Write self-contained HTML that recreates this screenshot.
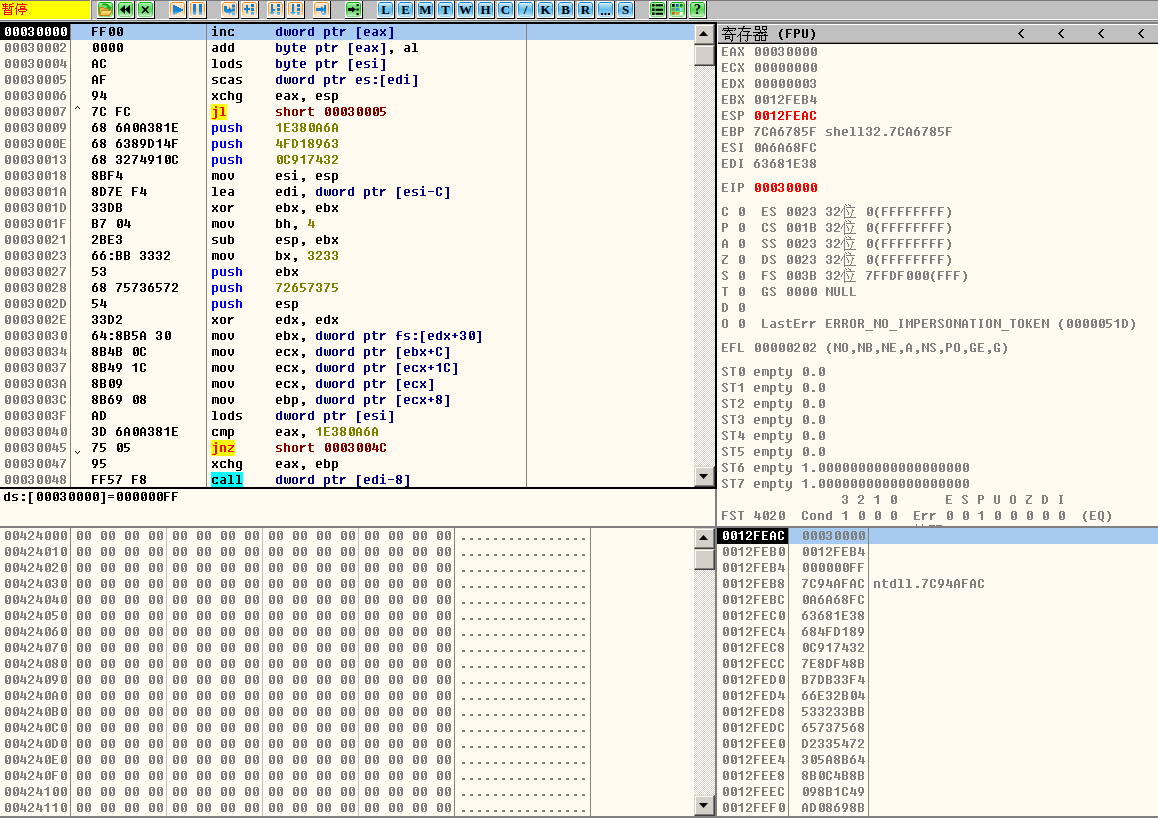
<!DOCTYPE html><html><head><meta charset="utf-8"><style>
*{margin:0;padding:0;box-sizing:border-box}
html,body{width:1158px;height:818px;overflow:hidden}
body{position:relative;background:#C0C0C0;font-family:"Liberation Mono",monospace}
.a{position:absolute}
.t{position:absolute;white-space:pre;font-family:"Liberation Mono",monospace;font-weight:bold;font-size:13.333px;line-height:16px;height:16px;transform:scaleX(0.875);transform-origin:0 0;letter-spacing:1.1428px}
.pane{position:absolute;background:#FFFBF0;overflow:hidden}
.vl{position:absolute;width:1px;background:#808080}
.btn{position:absolute;top:1px;width:18px;height:18px;background:#fff;border-right:1px solid #000;border-bottom:1px solid #000}
.ic{position:absolute;left:1px;top:1px;width:15px;height:15px;border-radius:2px}
.blue{background:linear-gradient(#d0ecfa,#78c8f0 30%,#4cb2ea 65%,#c4e8fa);box-shadow:inset 0 0 0 1px #0a80d8}
.org{background:linear-gradient(#fff0e0,#ffd8b0 30%,#ffcc98 60%,#ffead8);box-shadow:inset 0 0 0 1px #f59a30}
.grn{background:linear-gradient(#b0f0b0,#78dc78 30%,#60d060 60%,#c8f4c8);box-shadow:inset 0 0 0 1px #10c010}
.lt{position:absolute;left:0;top:0;width:15px;height:15px;text-align:center;font-family:"Liberation Serif",serif;font-weight:bold;font-size:13px;line-height:16px;color:#000}
.sbtn{position:absolute;background:#D4D0C8;border-top:1px solid #D4D0C8;border-left:1px solid #D4D0C8;border-right:1px solid #404040;border-bottom:1px solid #404040;box-shadow:inset -1px -1px 0 #808080, inset 1px 1px 0 #fff}
.track{position:absolute;background-color:#fff;background-image:linear-gradient(45deg,#D4D0C8 25%,transparent 25%,transparent 75%,#D4D0C8 75%),linear-gradient(45deg,#D4D0C8 25%,transparent 25%,transparent 75%,#D4D0C8 75%);background-size:2px 2px;background-position:0 0,1px 1px}
</style></head><body>
<svg width="0" height="0" style="position:absolute;left:0;top:0"><defs><linearGradient id="bdblue" x1="0" y1="0" x2="0" y2="1"><stop offset="0" stop-color="#0a7ed4"/><stop offset="0.6" stop-color="#2a98e0"/><stop offset="1" stop-color="#a8dcf6"/></linearGradient><linearGradient id="bgblue" x1="0" y1="0" x2="0" y2="1"><stop offset="0" stop-color="#e4f6fd"/><stop offset="0.12" stop-color="#b4e0f8"/><stop offset="0.5" stop-color="#62bcee"/><stop offset="0.8" stop-color="#86ccf2"/><stop offset="1" stop-color="#cceafa"/></linearGradient><linearGradient id="bdgrn" x1="0" y1="0" x2="0" y2="1"><stop offset="0" stop-color="#00b400"/><stop offset="0.6" stop-color="#20c020"/><stop offset="1" stop-color="#80e080"/></linearGradient><linearGradient id="bggrn" x1="0" y1="0" x2="0" y2="1"><stop offset="0" stop-color="#c8f4c8"/><stop offset="0.12" stop-color="#90e890"/><stop offset="0.5" stop-color="#5cd45c"/><stop offset="0.8" stop-color="#88e088"/><stop offset="1" stop-color="#ccf4cc"/></linearGradient><linearGradient id="bdorg" x1="0" y1="0" x2="0" y2="1"><stop offset="0" stop-color="#f08a18"/><stop offset="0.6" stop-color="#f5a23c"/><stop offset="1" stop-color="#fde2c4"/></linearGradient><linearGradient id="bgorg" x1="0" y1="0" x2="0" y2="1"><stop offset="0" stop-color="#fff8f0"/><stop offset="0.12" stop-color="#ffe4c8"/><stop offset="0.5" stop-color="#ffd09c"/><stop offset="0.8" stop-color="#ffdcb8"/><stop offset="1" stop-color="#ffeede"/></linearGradient><path id="g30" d="M3 3h4v1h-4zM2 4h2v1h-2zM6 4h2v1h-2zM2 5h2v1h-2zM5 5h3v1h-3zM2 6h2v1h-2zM5 6h3v1h-3zM2 7h2v1h-2zM6 7h2v1h-2zM2 8h3v1h-3zM6 8h2v1h-2zM2 9h3v1h-3zM6 9h2v1h-2zM2 10h2v1h-2zM6 10h2v1h-2zM3 11h4v1h-4z"/><path id="g31" d="M4 3h2v1h-2zM3 4h3v1h-3zM1 5h5v1h-5zM4 6h2v1h-2zM4 7h2v1h-2zM4 8h2v1h-2zM4 9h2v1h-2zM4 10h2v1h-2zM4 11h2v1h-2z"/><path id="g32" d="M2 3h4v1h-4zM1 4h2v1h-2zM5 4h2v1h-2zM1 5h2v1h-2zM5 5h2v1h-2zM5 6h2v1h-2zM4 7h2v1h-2zM3 8h2v1h-2zM2 9h2v1h-2zM1 10h2v1h-2zM1 11h6v1h-6z"/><path id="g33" d="M2 3h4v1h-4zM1 4h2v1h-2zM5 4h2v1h-2zM1 5h2v1h-2zM5 5h2v1h-2zM5 6h2v1h-2zM3 7h3v1h-3zM5 8h2v1h-2zM1 9h2v1h-2zM5 9h2v1h-2zM1 10h2v1h-2zM5 10h2v1h-2zM2 11h4v1h-4z"/><path id="g34" d="M2 3h2v1h-2zM2 4h2v1h-2zM2 5h2v1h-2zM5 5h2v1h-2zM2 6h2v1h-2zM5 6h2v1h-2zM2 7h2v1h-2zM5 7h2v1h-2zM1 8h2v1h-2zM5 8h2v1h-2zM1 9h7v1h-7zM5 10h2v1h-2zM5 11h2v1h-2z"/><path id="g35" d="M1 3h6v1h-6zM1 4h2v1h-2zM1 5h2v1h-2zM1 6h2v1h-2zM1 7h5v1h-5zM5 8h2v1h-2zM5 9h2v1h-2zM4 10h2v1h-2zM1 11h4v1h-4z"/><path id="g36" d="M3 3h3v1h-3zM3 4h2v1h-2zM2 5h2v1h-2zM1 6h5v1h-5zM1 7h2v1h-2zM5 7h2v1h-2zM1 8h2v1h-2zM5 8h2v1h-2zM1 9h2v1h-2zM5 9h2v1h-2zM1 10h2v1h-2zM5 10h2v1h-2zM2 11h4v1h-4z"/><path id="g37" d="M1 3h6v1h-6zM5 4h2v1h-2zM4 5h2v1h-2zM4 6h2v1h-2zM3 7h2v1h-2zM3 8h2v1h-2zM2 9h2v1h-2zM2 10h2v1h-2zM2 11h2v1h-2z"/><path id="g38" d="M2 3h4v1h-4zM1 4h2v1h-2zM5 4h2v1h-2zM1 5h2v1h-2zM5 5h2v1h-2zM1 6h3v1h-3zM5 6h2v1h-2zM2 7h4v1h-4zM1 8h2v1h-2zM4 8h3v1h-3zM1 9h2v1h-2zM5 9h2v1h-2zM1 10h2v1h-2zM5 10h2v1h-2zM2 11h4v1h-4z"/><path id="g39" d="M2 3h4v1h-4zM1 4h2v1h-2zM5 4h2v1h-2zM1 5h2v1h-2zM5 5h2v1h-2zM1 6h2v1h-2zM5 6h2v1h-2zM1 7h2v1h-2zM5 7h2v1h-2zM2 8h5v1h-5zM4 9h2v1h-2zM3 10h2v1h-2zM2 11h3v1h-3z"/><path id="g41" d="M3 3h2v1h-2zM2 4h4v1h-4zM1 5h2v1h-2zM5 5h2v1h-2zM1 6h2v1h-2zM5 6h2v1h-2zM1 7h2v1h-2zM5 7h2v1h-2zM1 8h6v1h-6zM1 9h2v1h-2zM5 9h2v1h-2zM1 10h2v1h-2zM5 10h2v1h-2zM1 11h2v1h-2zM5 11h2v1h-2z"/><path id="g42" d="M1 3h5v1h-5zM1 4h2v1h-2zM5 4h2v1h-2zM1 5h2v1h-2zM5 5h2v1h-2zM1 6h2v1h-2zM5 6h2v1h-2zM1 7h5v1h-5zM1 8h2v1h-2zM5 8h2v1h-2zM1 9h2v1h-2zM5 9h2v1h-2zM1 10h2v1h-2zM5 10h2v1h-2zM1 11h5v1h-5z"/><path id="g43" d="M2 3h4v1h-4zM1 4h2v1h-2zM5 4h2v1h-2zM1 5h2v1h-2zM5 5h2v1h-2zM1 6h2v1h-2zM1 7h2v1h-2zM1 8h2v1h-2zM1 9h2v1h-2zM5 9h2v1h-2zM1 10h2v1h-2zM5 10h2v1h-2zM2 11h4v1h-4z"/><path id="g44" d="M1 3h4v1h-4zM1 4h2v1h-2zM4 4h2v1h-2zM1 5h2v1h-2zM5 5h2v1h-2zM1 6h2v1h-2zM5 6h2v1h-2zM1 7h2v1h-2zM5 7h2v1h-2zM1 8h2v1h-2zM5 8h2v1h-2zM1 9h2v1h-2zM5 9h2v1h-2zM1 10h2v1h-2zM4 10h2v1h-2zM1 11h4v1h-4z"/><path id="g45" d="M1 3h6v1h-6zM1 4h2v1h-2zM1 5h2v1h-2zM1 6h2v1h-2zM1 7h5v1h-5zM1 8h2v1h-2zM1 9h2v1h-2zM1 10h2v1h-2zM1 11h6v1h-6z"/><path id="g46" d="M1 3h6v1h-6zM1 4h2v1h-2zM1 5h2v1h-2zM1 6h2v1h-2zM1 7h5v1h-5zM1 8h2v1h-2zM1 9h2v1h-2zM1 10h2v1h-2zM1 11h2v1h-2z"/><path id="g47" d="M2 3h4v1h-4zM1 4h2v1h-2zM5 4h2v1h-2zM1 5h2v1h-2zM5 5h2v1h-2zM1 6h2v1h-2zM1 7h2v1h-2zM1 8h2v1h-2zM4 8h3v1h-3zM1 9h2v1h-2zM5 9h2v1h-2zM1 10h2v1h-2zM5 10h2v1h-2zM2 11h5v1h-5z"/><path id="g49" d="M2 3h4v1h-4zM3 4h2v1h-2zM3 5h2v1h-2zM3 6h2v1h-2zM3 7h2v1h-2zM3 8h2v1h-2zM3 9h2v1h-2zM3 10h2v1h-2zM2 11h4v1h-4z"/><path id="g4b" d="M1 3h2v1h-2zM5 3h2v1h-2zM1 4h2v1h-2zM5 4h1v1h-1zM1 5h2v1h-2zM4 5h2v1h-2zM1 6h2v1h-2zM4 6h1v1h-1zM1 7h4v1h-4zM1 8h2v1h-2zM4 8h1v1h-1zM1 9h2v1h-2zM4 9h2v1h-2zM1 10h2v1h-2zM5 10h2v1h-2zM1 11h2v1h-2zM5 11h2v1h-2z"/><path id="g4c" d="M1 3h2v1h-2zM1 4h2v1h-2zM1 5h2v1h-2zM1 6h2v1h-2zM1 7h2v1h-2zM1 8h2v1h-2zM1 9h2v1h-2zM1 10h2v1h-2zM1 11h6v1h-6z"/><path id="g4d" d="M1 3h2v1h-2zM6 3h2v1h-2zM1 4h2v1h-2zM6 4h2v1h-2zM1 5h3v1h-3zM5 5h3v1h-3zM1 6h2v1h-2zM4 6h1v1h-1zM6 6h2v1h-2zM1 7h2v1h-2zM4 7h1v1h-1zM6 7h2v1h-2zM1 8h2v1h-2zM4 8h1v1h-1zM6 8h2v1h-2zM1 9h2v1h-2zM6 9h2v1h-2zM1 10h2v1h-2zM6 10h2v1h-2zM1 11h2v1h-2zM6 11h2v1h-2z"/><path id="g4e" d="M1 3h2v1h-2zM6 3h2v1h-2zM1 4h3v1h-3zM6 4h2v1h-2zM1 5h3v1h-3zM6 5h2v1h-2zM1 6h2v1h-2zM4 6h1v1h-1zM6 6h2v1h-2zM1 7h2v1h-2zM4 7h1v1h-1zM6 7h2v1h-2zM1 8h2v1h-2zM5 8h3v1h-3zM1 9h2v1h-2zM6 9h2v1h-2zM1 10h2v1h-2zM6 10h2v1h-2zM1 11h2v1h-2zM6 11h2v1h-2z"/><path id="g4f" d="M2 3h4v1h-4zM1 4h2v1h-2zM5 4h2v1h-2zM1 5h2v1h-2zM5 5h2v1h-2zM1 6h2v1h-2zM5 6h2v1h-2zM1 7h2v1h-2zM5 7h2v1h-2zM1 8h2v1h-2zM5 8h2v1h-2zM1 9h2v1h-2zM5 9h2v1h-2zM1 10h2v1h-2zM5 10h2v1h-2zM2 11h4v1h-4z"/><path id="g50" d="M1 3h5v1h-5zM1 4h2v1h-2zM5 4h2v1h-2zM1 5h2v1h-2zM5 5h2v1h-2zM1 6h2v1h-2zM5 6h2v1h-2zM1 7h5v1h-5zM1 8h2v1h-2zM1 9h2v1h-2zM1 10h2v1h-2zM1 11h2v1h-2z"/><path id="g51" d="M2 3h4v1h-4zM1 4h2v1h-2zM5 4h2v1h-2zM1 5h2v1h-2zM5 5h2v1h-2zM1 6h2v1h-2zM5 6h2v1h-2zM1 7h2v1h-2zM5 7h2v1h-2zM1 8h2v1h-2zM5 8h2v1h-2zM1 9h2v1h-2zM5 9h2v1h-2zM1 10h2v1h-2zM5 10h2v1h-2zM2 11h4v1h-4zM4 12h2v1h-2zM5 13h2v1h-2z"/><path id="g52" d="M1 3h5v1h-5zM1 4h2v1h-2zM5 4h2v1h-2zM1 5h2v1h-2zM5 5h2v1h-2zM1 6h2v1h-2zM5 6h2v1h-2zM1 7h5v1h-5zM1 8h2v1h-2zM4 8h2v1h-2zM1 9h2v1h-2zM5 9h2v1h-2zM1 10h2v1h-2zM5 10h2v1h-2zM1 11h2v1h-2zM5 11h2v1h-2z"/><path id="g53" d="M2 3h4v1h-4zM1 4h2v1h-2zM5 4h2v1h-2zM1 5h2v1h-2zM2 6h2v1h-2zM3 7h2v1h-2zM4 8h2v1h-2zM5 9h2v1h-2zM1 10h2v1h-2zM5 10h2v1h-2zM2 11h4v1h-4z"/><path id="g54" d="M1 3h6v1h-6zM3 4h2v1h-2zM3 5h2v1h-2zM3 6h2v1h-2zM3 7h2v1h-2zM3 8h2v1h-2zM3 9h2v1h-2zM3 10h2v1h-2zM3 11h2v1h-2z"/><path id="g55" d="M1 3h2v1h-2zM5 3h2v1h-2zM1 4h2v1h-2zM5 4h2v1h-2zM1 5h2v1h-2zM5 5h2v1h-2zM1 6h2v1h-2zM5 6h2v1h-2zM1 7h2v1h-2zM5 7h2v1h-2zM1 8h2v1h-2zM5 8h2v1h-2zM1 9h2v1h-2zM5 9h2v1h-2zM1 10h2v1h-2zM5 10h2v1h-2zM2 11h4v1h-4z"/><path id="g58" d="M1 3h2v1h-2zM5 3h2v1h-2zM1 4h2v1h-2zM5 4h2v1h-2zM2 5h2v1h-2zM5 5h1v1h-1zM3 6h2v1h-2zM3 7h2v1h-2zM2 8h1v1h-1zM4 8h2v1h-2zM1 9h2v1h-2zM5 9h2v1h-2zM1 10h2v1h-2zM5 10h2v1h-2zM1 11h2v1h-2zM5 11h2v1h-2z"/><path id="g5a" d="M1 3h6v1h-6zM5 4h2v1h-2zM4 5h2v1h-2zM3 6h2v1h-2zM2 7h2v1h-2zM1 8h2v1h-2zM1 9h2v1h-2zM1 10h2v1h-2zM1 11h6v1h-6z"/><path id="g61" d="M2 5h4v1h-4zM5 6h2v1h-2zM5 7h2v1h-2zM2 8h5v1h-5zM1 9h2v1h-2zM5 9h2v1h-2zM1 10h2v1h-2zM5 10h2v1h-2zM2 11h5v1h-5z"/><path id="g62" d="M1 3h2v1h-2zM1 4h2v1h-2zM1 5h5v1h-5zM1 6h2v1h-2zM5 6h2v1h-2zM1 7h2v1h-2zM5 7h2v1h-2zM1 8h2v1h-2zM5 8h2v1h-2zM1 9h2v1h-2zM5 9h2v1h-2zM1 10h2v1h-2zM5 10h2v1h-2zM1 11h5v1h-5z"/><path id="g63" d="M2 5h5v1h-5zM1 6h2v1h-2zM5 6h2v1h-2zM1 7h2v1h-2zM1 8h2v1h-2zM1 9h2v1h-2zM1 10h2v1h-2zM5 10h2v1h-2zM2 11h5v1h-5z"/><path id="g64" d="M5 3h2v1h-2zM5 4h2v1h-2zM2 5h5v1h-5zM1 6h2v1h-2zM5 6h2v1h-2zM1 7h2v1h-2zM5 7h2v1h-2zM1 8h2v1h-2zM5 8h2v1h-2zM1 9h2v1h-2zM5 9h2v1h-2zM1 10h2v1h-2zM5 10h2v1h-2zM2 11h5v1h-5z"/><path id="g65" d="M2 5h4v1h-4zM1 6h2v1h-2zM5 6h2v1h-2zM1 7h2v1h-2zM5 7h2v1h-2zM1 8h6v1h-6zM1 9h2v1h-2zM1 10h2v1h-2zM2 11h4v1h-4z"/><path id="g66" d="M3 3h4v1h-4zM2 4h2v1h-2zM2 5h2v1h-2zM2 6h2v1h-2zM1 7h6v1h-6zM2 8h2v1h-2zM2 9h2v1h-2zM2 10h2v1h-2zM2 11h2v1h-2z"/><path id="g67" d="M2 5h5v1h-5zM1 6h2v1h-2zM5 6h2v1h-2zM1 7h2v1h-2zM5 7h2v1h-2zM1 8h2v1h-2zM5 8h2v1h-2zM1 9h2v1h-2zM5 9h2v1h-2zM1 10h2v1h-2zM5 10h2v1h-2zM2 11h5v1h-5zM5 12h2v1h-2zM5 13h2v1h-2zM1 14h5v1h-5z"/><path id="g68" d="M1 3h2v1h-2zM1 4h2v1h-2zM1 5h5v1h-5zM1 6h2v1h-2zM5 6h2v1h-2zM1 7h2v1h-2zM5 7h2v1h-2zM1 8h2v1h-2zM5 8h2v1h-2zM1 9h2v1h-2zM5 9h2v1h-2zM1 10h2v1h-2zM5 10h2v1h-2zM1 11h2v1h-2zM5 11h2v1h-2z"/><path id="g69" d="M3 2h2v1h-2zM3 3h2v1h-2zM1 5h4v1h-4zM3 6h2v1h-2zM3 7h2v1h-2zM3 8h2v1h-2zM3 9h2v1h-2zM3 10h2v1h-2zM1 11h6v1h-6z"/><path id="g6a" d="M4 2h2v1h-2zM4 3h2v1h-2zM2 5h4v1h-4zM4 6h2v1h-2zM4 7h2v1h-2zM4 8h2v1h-2zM4 9h2v1h-2zM4 10h2v1h-2zM4 11h2v1h-2zM4 12h2v1h-2zM4 13h2v1h-2zM1 14h4v1h-4z"/><path id="g6c" d="M1 3h4v1h-4zM3 4h2v1h-2zM3 5h2v1h-2zM3 6h2v1h-2zM3 7h2v1h-2zM3 8h2v1h-2zM3 9h2v1h-2zM3 10h2v1h-2zM1 11h6v1h-6z"/><path id="g6d" d="M1 5h6v1h-6zM1 6h2v1h-2zM4 6h1v1h-1zM6 6h2v1h-2zM1 7h2v1h-2zM4 7h1v1h-1zM6 7h2v1h-2zM1 8h2v1h-2zM4 8h1v1h-1zM6 8h2v1h-2zM1 9h2v1h-2zM4 9h1v1h-1zM6 9h2v1h-2zM1 10h2v1h-2zM4 10h1v1h-1zM6 10h2v1h-2zM1 11h2v1h-2zM6 11h2v1h-2z"/><path id="g6e" d="M1 5h5v1h-5zM1 6h2v1h-2zM5 6h2v1h-2zM1 7h2v1h-2zM5 7h2v1h-2zM1 8h2v1h-2zM5 8h2v1h-2zM1 9h2v1h-2zM5 9h2v1h-2zM1 10h2v1h-2zM5 10h2v1h-2zM1 11h2v1h-2zM5 11h2v1h-2z"/><path id="g6f" d="M2 5h4v1h-4zM1 6h2v1h-2zM5 6h2v1h-2zM1 7h2v1h-2zM5 7h2v1h-2zM1 8h2v1h-2zM5 8h2v1h-2zM1 9h2v1h-2zM5 9h2v1h-2zM1 10h2v1h-2zM5 10h2v1h-2zM2 11h4v1h-4z"/><path id="g70" d="M1 5h5v1h-5zM1 6h2v1h-2zM5 6h2v1h-2zM1 7h2v1h-2zM5 7h2v1h-2zM1 8h2v1h-2zM5 8h2v1h-2zM1 9h2v1h-2zM5 9h2v1h-2zM1 10h2v1h-2zM5 10h2v1h-2zM1 11h5v1h-5zM1 12h2v1h-2zM1 13h2v1h-2zM1 14h2v1h-2z"/><path id="g72" d="M1 5h2v1h-2zM4 5h3v1h-3zM1 6h5v1h-5zM1 7h3v1h-3zM1 8h2v1h-2zM1 9h2v1h-2zM1 10h2v1h-2zM1 11h2v1h-2z"/><path id="g73" d="M2 5h5v1h-5zM1 6h2v1h-2zM1 7h2v1h-2zM2 8h4v1h-4zM5 9h2v1h-2zM5 10h2v1h-2zM1 11h5v1h-5z"/><path id="g74" d="M2 3h2v1h-2zM2 4h2v1h-2zM1 5h6v1h-6zM2 6h2v1h-2zM2 7h2v1h-2zM2 8h2v1h-2zM2 9h2v1h-2zM2 10h2v1h-2zM3 11h4v1h-4z"/><path id="g75" d="M1 5h2v1h-2zM5 5h2v1h-2zM1 6h2v1h-2zM5 6h2v1h-2zM1 7h2v1h-2zM5 7h2v1h-2zM1 8h2v1h-2zM5 8h2v1h-2zM1 9h2v1h-2zM5 9h2v1h-2zM1 10h2v1h-2zM5 10h2v1h-2zM2 11h5v1h-5z"/><path id="g76" d="M1 5h2v1h-2zM5 5h2v1h-2zM1 6h2v1h-2zM5 6h2v1h-2zM1 7h2v1h-2zM5 7h2v1h-2zM1 8h2v1h-2zM5 8h2v1h-2zM1 9h2v1h-2zM5 9h2v1h-2zM2 10h4v1h-4zM3 11h2v1h-2z"/><path id="g77" d="M1 5h2v1h-2zM6 5h2v1h-2zM1 6h2v1h-2zM4 6h1v1h-1zM6 6h2v1h-2zM1 7h2v1h-2zM4 7h1v1h-1zM6 7h2v1h-2zM1 8h2v1h-2zM4 8h1v1h-1zM6 8h2v1h-2zM1 9h2v1h-2zM4 9h1v1h-1zM6 9h2v1h-2zM1 10h2v1h-2zM4 10h1v1h-1zM6 10h2v1h-2zM2 11h2v1h-2zM5 11h2v1h-2z"/><path id="g78" d="M1 5h2v1h-2zM5 5h2v1h-2zM1 6h2v1h-2zM5 6h2v1h-2zM2 7h4v1h-4zM3 8h2v1h-2zM2 9h4v1h-4zM1 10h2v1h-2zM5 10h2v1h-2zM1 11h2v1h-2zM5 11h2v1h-2z"/><path id="g79" d="M1 5h2v1h-2zM5 5h2v1h-2zM1 6h2v1h-2zM5 6h2v1h-2zM1 7h2v1h-2zM5 7h2v1h-2zM1 8h2v1h-2zM5 8h2v1h-2zM1 9h2v1h-2zM5 9h2v1h-2zM1 10h2v1h-2zM5 10h2v1h-2zM2 11h5v1h-5zM4 12h2v1h-2zM3 13h2v1h-2zM0 14h4v1h-4z"/><path id="g7a" d="M1 5h6v1h-6zM5 6h2v1h-2zM4 7h2v1h-2zM3 8h2v1h-2zM2 9h2v1h-2zM1 10h2v1h-2zM1 11h6v1h-6z"/><path id="g28" d="M4 3h2v1h-2zM3 4h2v1h-2zM3 5h2v1h-2zM2 6h2v1h-2zM2 7h2v1h-2zM2 8h2v1h-2zM2 9h2v1h-2zM2 10h2v1h-2zM3 11h2v1h-2zM3 12h2v1h-2zM4 13h2v1h-2z"/><path id="g29" d="M2 3h2v1h-2zM3 4h2v1h-2zM3 5h2v1h-2zM4 6h2v1h-2zM4 7h2v1h-2zM4 8h2v1h-2zM4 9h2v1h-2zM4 10h2v1h-2zM3 11h2v1h-2zM3 12h2v1h-2zM2 13h2v1h-2z"/><path id="g5b" d="M2 3h4v1h-4zM2 4h2v1h-2zM2 5h2v1h-2zM2 6h2v1h-2zM2 7h2v1h-2zM2 8h2v1h-2zM2 9h2v1h-2zM2 10h2v1h-2zM2 11h2v1h-2zM2 12h2v1h-2zM2 13h2v1h-2zM2 14h4v1h-4z"/><path id="g5d" d="M2 3h4v1h-4zM4 4h2v1h-2zM4 5h2v1h-2zM4 6h2v1h-2zM4 7h2v1h-2zM4 8h2v1h-2zM4 9h2v1h-2zM4 10h2v1h-2zM4 11h2v1h-2zM4 12h2v1h-2zM4 13h2v1h-2zM2 14h4v1h-4z"/><path id="g2c" d="M3 10h3v1h-3zM3 11h3v1h-3zM4 12h2v1h-2zM3 13h2v1h-2z"/><path id="g2e" d="M3 10h3v1h-3zM3 11h3v1h-3z"/><path id="g3a" d="M3 5h3v1h-3zM3 6h3v1h-3zM3 10h3v1h-3zM3 11h3v1h-3z"/><path id="g2b" d="M3 5h2v1h-2zM3 6h2v1h-2zM1 7h6v1h-6zM3 8h2v1h-2zM3 9h2v1h-2z"/><path id="g2d" d="M1 7h6v1h-6z"/><path id="g3d" d="M1 6h6v1h-6zM1 8h6v1h-6z"/><path id="g5f" d="M0 14h8v1h-8z"/></defs></svg>
<div class="a" style="left:0;top:0;width:1158px;height:1px;background:#787878"></div>
<div class="a" style="left:0;top:0;width:90px;height:1px;background:#787878"></div>
<div class="a" style="left:0;top:19px;width:1158px;height:1px;background:#fff"></div>
<div class="a" style="left:0;top:20px;width:1158px;height:1px;background:#808080"></div>
<div class="a" style="left:0;top:21px;width:1158px;height:1px;background:#C0C0C0"></div>
<div class="a" style="left:0;top:1px;width:90px;height:18px;background:#FFFF00"></div>
<div class="a" style="left:90px;top:0;width:1px;height:20px;background:#fff"></div>
<div class="a" style="left:91px;top:1px;width:1px;height:19px;background:#808080"></div>
<svg class="a" style="left:0;top:0" width="30" height="18" shape-rendering="crispEdges"><path fill="#FF0000" d="M5 3h1v1h-1zM12 3h2v1h-2zM2 4h6v1h-6zM9 4h3v1h-3zM3 5h1v1h-1zM5 5h1v1h-1zM9 5h1v1h-1zM3 6h5v1h-5zM9 6h5v1h-5zM5 7h1v1h-1zM9 7h1v1h-1zM11 7h1v1h-1zM2 8h6v1h-6zM9 8h1v1h-1zM11 8h1v1h-1zM5 9h1v1h-1zM8 9h1v1h-1zM11 9h1v1h-1zM4 10h8v1h-8zM4 11h1v1h-1zM11 11h1v1h-1zM4 12h8v1h-8zM4 13h1v1h-1zM11 13h1v1h-1zM4 14h8v1h-8zM17 3h1v1h-1zM22 3h1v1h-1zM17 4h10v1h-10zM17 5h1v1h-1zM16 6h1v1h-1zM20 6h5v1h-5zM16 7h1v1h-1zM20 7h1v1h-1zM24 7h1v1h-1zM15 8h2v1h-2zM20 8h5v1h-5zM16 9h1v1h-1zM18 9h9v1h-9zM16 10h1v1h-1zM18 10h1v1h-1zM26 10h1v1h-1zM16 11h1v1h-1zM19 11h7v1h-7zM16 12h1v1h-1zM22 12h1v1h-1zM16 13h1v1h-1zM22 13h1v1h-1zM16 14h1v1h-1zM21 14h2v1h-2z"/></svg>
<div class="btn" style="left:97px"><div class="ic"><svg class="a" width="15" height="15" viewBox="0 0 15 15"><path d="M2 0H13L15 2V13L13 15H2L0 13V2Z" fill="url(#bdgrn)"/><path d="M2 1H13L14 2V13L13 14H2L1 13V2Z" fill="url(#bggrn)"/></svg><svg class="a" width="15" height="15" viewBox="0 0 15 15"><defs><linearGradient id="fo" x1="0" y1="0" x2="0" y2="1"><stop offset="0" stop-color="#fff0a0"/><stop offset="1" stop-color="#e8b030"/></linearGradient></defs><path d="M1.5 5.5h4l1 1h5.5v6.5h-10.5z" fill="#e6b444" stroke="#b8820e" stroke-width="1"/><path d="M1.5 13.5l2-5h10.5l-2 5z" fill="url(#fo)" stroke="#c08818" stroke-width="1"/><path d="M4 2.8Q8.5 0.8 11.2 5.5" stroke="#18a818" stroke-width="1.8" fill="none"/><path d="M8.6 5h5.2l-2.6 3.4z" fill="#18a818"/></svg></div></div>
<div class="btn" style="left:117px"><div class="ic"><svg class="a" width="15" height="15" viewBox="0 0 15 15"><path d="M2 0H13L15 2V13L13 15H2L0 13V2Z" fill="url(#bdgrn)"/><path d="M2 1H13L14 2V13L13 14H2L1 13V2Z" fill="url(#bggrn)"/></svg><svg class="a" width="15" height="15" viewBox="0 0 15 15"><path d="M7 3v9L2 7.5zM12 3v9L7 7.5z" fill="#000"/></svg></div></div>
<div class="btn" style="left:137px"><div class="ic"><svg class="a" width="15" height="15" viewBox="0 0 15 15"><path d="M2 0H13L15 2V13L13 15H2L0 13V2Z" fill="url(#bdgrn)"/><path d="M2 1H13L14 2V13L13 14H2L1 13V2Z" fill="url(#bggrn)"/></svg><svg class="a" width="15" height="15" viewBox="0 0 15 15"><path d="M4 4.5L10.5 11M10.5 4.5L4 11" stroke="#000" stroke-width="1.7"/></svg></div></div>
<div class="btn" style="left:169px"><div class="ic"><svg class="a" width="15" height="15" viewBox="0 0 15 15"><path d="M2 0H13L15 2V13L13 15H2L0 13V2Z" fill="url(#bdorg)"/><path d="M2 1H13L14 2V13L13 14H2L1 13V2Z" fill="url(#bgorg)"/></svg><svg class="a" width="15" height="15" viewBox="0 0 15 15"><defs><linearGradient id="gb" gradientUnits="userSpaceOnUse" x1="0" y1="2" x2="0" y2="14"><stop offset="0" stop-color="#0a78cc"/><stop offset="0.55" stop-color="#1088d8"/><stop offset="1" stop-color="#9adcff"/></linearGradient></defs><path d="M3 3h2v1h2v1h2v1h2v1h2v2h-2v1h-2v1h-2v1h-2v1h-2z" fill="url(#gb)"/></svg></div></div>
<div class="btn" style="left:189px"><div class="ic"><svg class="a" width="15" height="15" viewBox="0 0 15 15"><path d="M2 0H13L15 2V13L13 15H2L0 13V2Z" fill="url(#bdorg)"/><path d="M2 1H13L14 2V13L13 14H2L1 13V2Z" fill="url(#bgorg)"/></svg><svg class="a" width="15" height="15" viewBox="0 0 15 15"><defs><linearGradient id="gb" gradientUnits="userSpaceOnUse" x1="0" y1="2" x2="0" y2="14"><stop offset="0" stop-color="#0a78cc"/><stop offset="0.55" stop-color="#1088d8"/><stop offset="1" stop-color="#9adcff"/></linearGradient></defs><path d="M3 2h3v11H3zM9 2h3v11H9z" fill="url(#gb)"/></svg></div></div>
<div class="btn" style="left:221px"><div class="ic"><svg class="a" width="15" height="15" viewBox="0 0 15 15"><path d="M2 0H13L15 2V13L13 15H2L0 13V2Z" fill="url(#bdorg)"/><path d="M2 1H13L14 2V13L13 14H2L1 13V2Z" fill="url(#bgorg)"/></svg><svg class="a" width="15" height="15" viewBox="0 0 15 15"><defs><linearGradient id="gb" gradientUnits="userSpaceOnUse" x1="0" y1="2" x2="0" y2="14"><stop offset="0" stop-color="#0a78cc"/><stop offset="0.55" stop-color="#1088d8"/><stop offset="1" stop-color="#9adcff"/></linearGradient></defs><path d="M2 4h3v3h2v-2l4 4-4 4v-2H4l-2-2z" fill="url(#gb)"/><rect x="10" y="2.5" width="3" height="3" fill="url(#gb)"/><rect x="10" y="6.5" width="3" height="3" fill="url(#gb)"/><rect x="10" y="10.5" width="3" height="3" fill="url(#gb)"/></svg></div></div>
<div class="btn" style="left:241px"><div class="ic"><svg class="a" width="15" height="15" viewBox="0 0 15 15"><path d="M2 0H13L15 2V13L13 15H2L0 13V2Z" fill="url(#bdorg)"/><path d="M2 1H13L14 2V13L13 14H2L1 13V2Z" fill="url(#bgorg)"/></svg><svg class="a" width="15" height="15" viewBox="0 0 15 15"><defs><linearGradient id="gb" gradientUnits="userSpaceOnUse" x1="0" y1="2" x2="0" y2="14"><stop offset="0" stop-color="#0a78cc"/><stop offset="0.55" stop-color="#1088d8"/><stop offset="1" stop-color="#9adcff"/></linearGradient></defs><path d="M4 3h2v3h2v2H6v3l-1 1-1-1V8H2V6h2z" fill="url(#gb)"/><rect x="9" y="2" width="3" height="3" fill="url(#gb)"/><rect x="9" y="6" width="3" height="3" fill="url(#gb)"/><rect x="9" y="10" width="3" height="3" fill="url(#gb)"/></svg></div></div>
<div class="btn" style="left:267px"><div class="ic"><svg class="a" width="15" height="15" viewBox="0 0 15 15"><path d="M2 0H13L15 2V13L13 15H2L0 13V2Z" fill="url(#bdorg)"/><path d="M2 1H13L14 2V13L13 14H2L1 13V2Z" fill="url(#bgorg)"/></svg><svg class="a" width="15" height="15" viewBox="0 0 15 15"><defs><linearGradient id="gb" gradientUnits="userSpaceOnUse" x1="0" y1="2" x2="0" y2="14"><stop offset="0" stop-color="#0a78cc"/><stop offset="0.55" stop-color="#1088d8"/><stop offset="1" stop-color="#9adcff"/></linearGradient></defs><path d="M3 2h2v5h2v2H5v1h2l-3 3-3-3h2z" fill="url(#gb)"/><rect x="9" y="2" width="3" height="3" fill="url(#gb)"/><rect x="9" y="6" width="3" height="3" fill="url(#gb)"/><rect x="9" y="10" width="3" height="3" fill="url(#gb)"/></svg></div></div>
<div class="btn" style="left:287px"><div class="ic"><svg class="a" width="15" height="15" viewBox="0 0 15 15"><path d="M2 0H13L15 2V13L13 15H2L0 13V2Z" fill="url(#bdorg)"/><path d="M2 1H13L14 2V13L13 14H2L1 13V2Z" fill="url(#bgorg)"/></svg><svg class="a" width="15" height="15" viewBox="0 0 15 15"><defs><linearGradient id="gb" gradientUnits="userSpaceOnUse" x1="0" y1="2" x2="0" y2="14"><stop offset="0" stop-color="#0a78cc"/><stop offset="0.55" stop-color="#1088d8"/><stop offset="1" stop-color="#9adcff"/></linearGradient></defs><path d="M4 2h2v8h2l-3 3-3-3h2z" fill="url(#gb)"/><rect x="9" y="2" width="3" height="3" fill="url(#gb)"/><rect x="9" y="6" width="3" height="3" fill="url(#gb)"/><rect x="9" y="10" width="3" height="3" fill="url(#gb)"/></svg></div></div>
<div class="btn" style="left:313px"><div class="ic"><svg class="a" width="15" height="15" viewBox="0 0 15 15"><path d="M2 0H13L15 2V13L13 15H2L0 13V2Z" fill="url(#bdorg)"/><path d="M2 1H13L14 2V13L13 14H2L1 13V2Z" fill="url(#bgorg)"/></svg><svg class="a" width="15" height="15" viewBox="0 0 15 15"><defs><linearGradient id="gb" gradientUnits="userSpaceOnUse" x1="0" y1="2" x2="0" y2="14"><stop offset="0" stop-color="#0a78cc"/><stop offset="0.55" stop-color="#1088d8"/><stop offset="1" stop-color="#9adcff"/></linearGradient></defs><path d="M2 6h5V4l4 3.5-4 3.5V9H2z" fill="url(#gb)"/><path d="M10 3h2v10H8v-2h2z" fill="url(#gb)"/></svg></div></div>
<div class="btn" style="left:345px"><div class="ic"><svg class="a" width="15" height="15" viewBox="0 0 15 15"><path d="M2 0H13L15 2V13L13 15H2L0 13V2Z" fill="url(#bdgrn)"/><path d="M2 1H13L14 2V13L13 14H2L1 13V2Z" fill="url(#bggrn)"/></svg><svg class="a" width="15" height="15" viewBox="0 0 15 15"><path d="M2 6h4V4.5l4 3-4 3V9H2z" fill="#000"/><rect x="10.5" y="2" width="2.2" height="2.2" fill="#000"/><rect x="10.5" y="6.5" width="2.2" height="2.2" fill="#000"/><rect x="10.5" y="11" width="2.2" height="2.2" fill="#000"/></svg></div></div>
<div class="btn" style="left:377px"><div class="ic"><svg class="a" width="15" height="15" viewBox="0 0 15 15"><path d="M2 0H13L15 2V13L13 15H2L0 13V2Z" fill="url(#bdblue)"/><path d="M2 1H13L14 2V13L13 14H2L1 13V2Z" fill="url(#bgblue)"/></svg><div class="lt">L</div></div></div>
<div class="btn" style="left:397px"><div class="ic"><svg class="a" width="15" height="15" viewBox="0 0 15 15"><path d="M2 0H13L15 2V13L13 15H2L0 13V2Z" fill="url(#bdblue)"/><path d="M2 1H13L14 2V13L13 14H2L1 13V2Z" fill="url(#bgblue)"/></svg><div class="lt">E</div></div></div>
<div class="btn" style="left:417px"><div class="ic"><svg class="a" width="15" height="15" viewBox="0 0 15 15"><path d="M2 0H13L15 2V13L13 15H2L0 13V2Z" fill="url(#bdblue)"/><path d="M2 1H13L14 2V13L13 14H2L1 13V2Z" fill="url(#bgblue)"/></svg><div class="lt">M</div></div></div>
<div class="btn" style="left:437px"><div class="ic"><svg class="a" width="15" height="15" viewBox="0 0 15 15"><path d="M2 0H13L15 2V13L13 15H2L0 13V2Z" fill="url(#bdblue)"/><path d="M2 1H13L14 2V13L13 14H2L1 13V2Z" fill="url(#bgblue)"/></svg><div class="lt">T</div></div></div>
<div class="btn" style="left:457px"><div class="ic"><svg class="a" width="15" height="15" viewBox="0 0 15 15"><path d="M2 0H13L15 2V13L13 15H2L0 13V2Z" fill="url(#bdblue)"/><path d="M2 1H13L14 2V13L13 14H2L1 13V2Z" fill="url(#bgblue)"/></svg><div class="lt">W</div></div></div>
<div class="btn" style="left:477px"><div class="ic"><svg class="a" width="15" height="15" viewBox="0 0 15 15"><path d="M2 0H13L15 2V13L13 15H2L0 13V2Z" fill="url(#bdblue)"/><path d="M2 1H13L14 2V13L13 14H2L1 13V2Z" fill="url(#bgblue)"/></svg><div class="lt">H</div></div></div>
<div class="btn" style="left:497px"><div class="ic"><svg class="a" width="15" height="15" viewBox="0 0 15 15"><path d="M2 0H13L15 2V13L13 15H2L0 13V2Z" fill="url(#bdblue)"/><path d="M2 1H13L14 2V13L13 14H2L1 13V2Z" fill="url(#bgblue)"/></svg><div class="lt">C</div></div></div>
<div class="btn" style="left:517px"><div class="ic"><svg class="a" width="15" height="15" viewBox="0 0 15 15"><path d="M2 0H13L15 2V13L13 15H2L0 13V2Z" fill="url(#bdblue)"/><path d="M2 1H13L14 2V13L13 14H2L1 13V2Z" fill="url(#bgblue)"/></svg><div class="lt">/</div></div></div>
<div class="btn" style="left:537px"><div class="ic"><svg class="a" width="15" height="15" viewBox="0 0 15 15"><path d="M2 0H13L15 2V13L13 15H2L0 13V2Z" fill="url(#bdblue)"/><path d="M2 1H13L14 2V13L13 14H2L1 13V2Z" fill="url(#bgblue)"/></svg><div class="lt">K</div></div></div>
<div class="btn" style="left:557px"><div class="ic"><svg class="a" width="15" height="15" viewBox="0 0 15 15"><path d="M2 0H13L15 2V13L13 15H2L0 13V2Z" fill="url(#bdblue)"/><path d="M2 1H13L14 2V13L13 14H2L1 13V2Z" fill="url(#bgblue)"/></svg><div class="lt">B</div></div></div>
<div class="btn" style="left:577px"><div class="ic"><svg class="a" width="15" height="15" viewBox="0 0 15 15"><path d="M2 0H13L15 2V13L13 15H2L0 13V2Z" fill="url(#bdblue)"/><path d="M2 1H13L14 2V13L13 14H2L1 13V2Z" fill="url(#bgblue)"/></svg><div class="lt">R</div></div></div>
<div class="btn" style="left:597px"><div class="ic"><svg class="a" width="15" height="15" viewBox="0 0 15 15"><path d="M2 0H13L15 2V13L13 15H2L0 13V2Z" fill="url(#bdblue)"/><path d="M2 1H13L14 2V13L13 14H2L1 13V2Z" fill="url(#bgblue)"/></svg><svg class="a" width="15" height="15" viewBox="0 0 15 15"><rect x="3" y="11" width="2" height="2" fill="#000"/><rect x="6.5" y="11" width="2" height="2" fill="#000"/><rect x="10" y="11" width="2" height="2" fill="#000"/></svg></div></div>
<div class="btn" style="left:617px"><div class="ic"><svg class="a" width="15" height="15" viewBox="0 0 15 15"><path d="M2 0H13L15 2V13L13 15H2L0 13V2Z" fill="url(#bdblue)"/><path d="M2 1H13L14 2V13L13 14H2L1 13V2Z" fill="url(#bgblue)"/></svg><div class="lt">S</div></div></div>
<div class="btn" style="left:649px"><div class="ic"><svg class="a" width="15" height="15" viewBox="0 0 15 15"><path d="M2 0H13L15 2V13L13 15H2L0 13V2Z" fill="url(#bdgrn)"/><path d="M2 1H13L14 2V13L13 14H2L1 13V2Z" fill="url(#bggrn)"/></svg><svg class="a" width="15" height="15" viewBox="0 0 15 15"><rect x="2" y="2" width="2.6" height="2.5" fill="#000"/><rect x="2" y="6.5" width="2.6" height="2.5" fill="#000"/><rect x="2" y="10.5" width="2.6" height="2.5" fill="#000"/><rect x="5.6" y="2.3" width="7.4" height="2" fill="#000"/><rect x="5.6" y="6.8" width="7.4" height="2" fill="#000"/><rect x="5.6" y="10.8" width="7.4" height="2" fill="#000"/></svg></div></div>
<div class="btn" style="left:669px"><div class="ic"><svg class="a" width="15" height="15" viewBox="0 0 15 15"><path d="M2 0H13L15 2V13L13 15H2L0 13V2Z" fill="url(#bdgrn)"/><path d="M2 1H13L14 2V13L13 14H2L1 13V2Z" fill="url(#bggrn)"/></svg><svg class="a" width="15" height="15" viewBox="0 0 15 15"><rect x="2" y="2" width="2.7" height="2.7" fill="#000"/><rect x="6" y="2" width="2.7" height="2.7" fill="#1050d0"/><rect x="10" y="2" width="2.7" height="2.7" fill="#008000"/><rect x="2" y="6" width="2.7" height="2.7" fill="#808080"/><rect x="6" y="6" width="2.7" height="2.7" fill="#10a0f0"/><rect x="10" y="6" width="2.7" height="2.7" fill="#a0e0ff"/><rect x="2" y="10" width="2.7" height="2.7" fill="#f05010"/><rect x="6" y="10" width="2.7" height="2.7" fill="#f0a020"/><rect x="10" y="10" width="2.7" height="2.7" fill="#fff"/></svg></div></div>
<div class="btn" style="left:689px"><div class="ic"><svg class="a" width="15" height="15" viewBox="0 0 15 15"><path d="M2 0H13L15 2V13L13 15H2L0 13V2Z" fill="url(#bdgrn)"/><path d="M2 1H13L14 2V13L13 14H2L1 13V2Z" fill="url(#bggrn)"/></svg><div class="lt" style="font-size:14px;line-height:16px">?</div></div></div>
<div class="a" style="left:0;top:22px;width:717px;height:2px;background:#000"></div>
<div class="a" style="left:717px;top:22px;width:441px;height:2px;background:#808080"></div>
<div class="pane" style="left:0;top:24px;width:715px;height:463px">
<div class="a" style="left:0;top:0;width:70px;height:16px;background:#000"></div>
<div class="a" style="left:71px;top:0;width:623px;height:16px;background:#A6CAF0"></div>
<div class="vl" style="left:70px;top:0;height:463px"></div>
<div class="vl" style="left:206px;top:0;height:463px"></div>
<div class="vl" style="left:526px;top:0;height:463px"></div>
<svg class="a" style="left:3px;top:0px" width="64" height="16" shape-rendering="crispEdges"><g fill="#FFFFFF"><use href="#g30" x="0"/><use href="#g30" x="8"/><use href="#g30" x="16"/><use href="#g33" x="24"/><use href="#g30" x="32"/><use href="#g30" x="40"/><use href="#g30" x="48"/><use href="#g30" x="56"/></g></svg>
<svg class="a" style="left:91px;top:0px" width="32" height="16" shape-rendering="crispEdges"><g fill="#000"><use href="#g46" x="0"/><use href="#g46" x="8"/><use href="#g30" x="16"/><use href="#g30" x="24"/></g></svg>
<svg class="a" style="left:211px;top:0px" width="24" height="16" shape-rendering="crispEdges"><g fill="#000"><use href="#g69" x="0"/><use href="#g6e" x="8"/><use href="#g63" x="16"/></g></svg>
<svg class="a" style="left:275px;top:0px" width="120" height="16" shape-rendering="crispEdges"><g fill="#000080"><use href="#g64" x="0"/><use href="#g77" x="8"/><use href="#g6f" x="16"/><use href="#g72" x="24"/><use href="#g64" x="32"/><use href="#g70" x="48"/><use href="#g74" x="56"/><use href="#g72" x="64"/><use href="#g5b" x="80"/><use href="#g65" x="88"/><use href="#g61" x="96"/><use href="#g78" x="104"/><use href="#g5d" x="112"/></g></svg>
<svg class="a" style="left:3px;top:16px" width="64" height="16" shape-rendering="crispEdges"><g fill="#808080"><use href="#g30" x="0"/><use href="#g30" x="8"/><use href="#g30" x="16"/><use href="#g33" x="24"/><use href="#g30" x="32"/><use href="#g30" x="40"/><use href="#g30" x="48"/><use href="#g32" x="56"/></g></svg>
<svg class="a" style="left:91px;top:16px" width="32" height="16" shape-rendering="crispEdges"><g fill="#000"><use href="#g30" x="0"/><use href="#g30" x="8"/><use href="#g30" x="16"/><use href="#g30" x="24"/></g></svg>
<svg class="a" style="left:211px;top:16px" width="24" height="16" shape-rendering="crispEdges"><g fill="#000"><use href="#g61" x="0"/><use href="#g64" x="8"/><use href="#g64" x="16"/></g></svg>
<svg class="a" style="left:275px;top:16px" width="144" height="16" shape-rendering="crispEdges"><g fill="#000080"><use href="#g62" x="0"/><use href="#g79" x="8"/><use href="#g74" x="16"/><use href="#g65" x="24"/><use href="#g70" x="40"/><use href="#g74" x="48"/><use href="#g72" x="56"/><use href="#g5b" x="72"/><use href="#g65" x="80"/><use href="#g61" x="88"/><use href="#g78" x="96"/><use href="#g5d" x="104"/></g><g fill="#000"><use href="#g2c" x="112"/><use href="#g61" x="128"/><use href="#g6c" x="136"/></g></svg>
<svg class="a" style="left:3px;top:32px" width="64" height="16" shape-rendering="crispEdges"><g fill="#808080"><use href="#g30" x="0"/><use href="#g30" x="8"/><use href="#g30" x="16"/><use href="#g33" x="24"/><use href="#g30" x="32"/><use href="#g30" x="40"/><use href="#g30" x="48"/><use href="#g34" x="56"/></g></svg>
<svg class="a" style="left:91px;top:32px" width="16" height="16" shape-rendering="crispEdges"><g fill="#000"><use href="#g41" x="0"/><use href="#g43" x="8"/></g></svg>
<svg class="a" style="left:211px;top:32px" width="32" height="16" shape-rendering="crispEdges"><g fill="#000"><use href="#g6c" x="0"/><use href="#g6f" x="8"/><use href="#g64" x="16"/><use href="#g73" x="24"/></g></svg>
<svg class="a" style="left:275px;top:32px" width="112" height="16" shape-rendering="crispEdges"><g fill="#000080"><use href="#g62" x="0"/><use href="#g79" x="8"/><use href="#g74" x="16"/><use href="#g65" x="24"/><use href="#g70" x="40"/><use href="#g74" x="48"/><use href="#g72" x="56"/><use href="#g5b" x="72"/><use href="#g65" x="80"/><use href="#g73" x="88"/><use href="#g69" x="96"/><use href="#g5d" x="104"/></g></svg>
<svg class="a" style="left:3px;top:48px" width="64" height="16" shape-rendering="crispEdges"><g fill="#808080"><use href="#g30" x="0"/><use href="#g30" x="8"/><use href="#g30" x="16"/><use href="#g33" x="24"/><use href="#g30" x="32"/><use href="#g30" x="40"/><use href="#g30" x="48"/><use href="#g35" x="56"/></g></svg>
<svg class="a" style="left:91px;top:48px" width="16" height="16" shape-rendering="crispEdges"><g fill="#000"><use href="#g41" x="0"/><use href="#g46" x="8"/></g></svg>
<svg class="a" style="left:211px;top:48px" width="32" height="16" shape-rendering="crispEdges"><g fill="#000"><use href="#g73" x="0"/><use href="#g63" x="8"/><use href="#g61" x="16"/><use href="#g73" x="24"/></g></svg>
<svg class="a" style="left:275px;top:48px" width="144" height="16" shape-rendering="crispEdges"><g fill="#000080"><use href="#g64" x="0"/><use href="#g77" x="8"/><use href="#g6f" x="16"/><use href="#g72" x="24"/><use href="#g64" x="32"/><use href="#g70" x="48"/><use href="#g74" x="56"/><use href="#g72" x="64"/><use href="#g65" x="80"/><use href="#g73" x="88"/><use href="#g3a" x="96"/><use href="#g5b" x="104"/><use href="#g65" x="112"/><use href="#g64" x="120"/><use href="#g69" x="128"/><use href="#g5d" x="136"/></g></svg>
<svg class="a" style="left:3px;top:64px" width="64" height="16" shape-rendering="crispEdges"><g fill="#808080"><use href="#g30" x="0"/><use href="#g30" x="8"/><use href="#g30" x="16"/><use href="#g33" x="24"/><use href="#g30" x="32"/><use href="#g30" x="40"/><use href="#g30" x="48"/><use href="#g36" x="56"/></g></svg>
<svg class="a" style="left:91px;top:64px" width="16" height="16" shape-rendering="crispEdges"><g fill="#000"><use href="#g39" x="0"/><use href="#g34" x="8"/></g></svg>
<svg class="a" style="left:211px;top:64px" width="32" height="16" shape-rendering="crispEdges"><g fill="#000"><use href="#g78" x="0"/><use href="#g63" x="8"/><use href="#g68" x="16"/><use href="#g67" x="24"/></g></svg>
<svg class="a" style="left:275px;top:64px" width="64" height="16" shape-rendering="crispEdges"><g fill="#000"><use href="#g65" x="0"/><use href="#g61" x="8"/><use href="#g78" x="16"/><use href="#g2c" x="24"/><use href="#g65" x="40"/><use href="#g73" x="48"/><use href="#g70" x="56"/></g></svg>
<svg class="a" style="left:3px;top:80px" width="64" height="16" shape-rendering="crispEdges"><g fill="#808080"><use href="#g30" x="0"/><use href="#g30" x="8"/><use href="#g30" x="16"/><use href="#g33" x="24"/><use href="#g30" x="32"/><use href="#g30" x="40"/><use href="#g30" x="48"/><use href="#g37" x="56"/></g></svg>
<div class="a" style="left:75px;top:84px;width:1px;height:1px;background:#000"></div>
<div class="a" style="left:76px;top:83px;width:1px;height:1px;background:#000"></div>
<div class="a" style="left:77px;top:82px;width:1px;height:1px;background:#000"></div>
<div class="a" style="left:78px;top:83px;width:1px;height:1px;background:#000"></div>
<div class="a" style="left:79px;top:84px;width:1px;height:1px;background:#000"></div>
<svg class="a" style="left:91px;top:80px" width="40" height="16" shape-rendering="crispEdges"><g fill="#000"><use href="#g37" x="0"/><use href="#g43" x="8"/><use href="#g46" x="24"/><use href="#g43" x="32"/></g></svg>
<svg class="a" style="left:211px;top:80px" width="16" height="16" shape-rendering="crispEdges"><rect x="0" width="16" height="16" fill="#FFFF00"/><g fill="#FF0000"><use href="#g6a" x="0"/><use href="#g6c" x="8"/></g></svg>
<svg class="a" style="left:275px;top:80px" width="112" height="16" shape-rendering="crispEdges"><g fill="#800000"><use href="#g73" x="0"/><use href="#g68" x="8"/><use href="#g6f" x="16"/><use href="#g72" x="24"/><use href="#g74" x="32"/><use href="#g30" x="48"/><use href="#g30" x="56"/><use href="#g30" x="64"/><use href="#g33" x="72"/><use href="#g30" x="80"/><use href="#g30" x="88"/><use href="#g30" x="96"/><use href="#g35" x="104"/></g></svg>
<svg class="a" style="left:3px;top:96px" width="64" height="16" shape-rendering="crispEdges"><g fill="#808080"><use href="#g30" x="0"/><use href="#g30" x="8"/><use href="#g30" x="16"/><use href="#g33" x="24"/><use href="#g30" x="32"/><use href="#g30" x="40"/><use href="#g30" x="48"/><use href="#g39" x="56"/></g></svg>
<svg class="a" style="left:91px;top:96px" width="88" height="16" shape-rendering="crispEdges"><g fill="#000"><use href="#g36" x="0"/><use href="#g38" x="8"/><use href="#g36" x="24"/><use href="#g41" x="32"/><use href="#g30" x="40"/><use href="#g41" x="48"/><use href="#g33" x="56"/><use href="#g38" x="64"/><use href="#g31" x="72"/><use href="#g45" x="80"/></g></svg>
<svg class="a" style="left:211px;top:96px" width="32" height="16" shape-rendering="crispEdges"><g fill="#0000FF"><use href="#g70" x="0"/><use href="#g75" x="8"/><use href="#g73" x="16"/><use href="#g68" x="24"/></g></svg>
<svg class="a" style="left:275px;top:96px" width="64" height="16" shape-rendering="crispEdges"><g fill="#808000"><use href="#g31" x="0"/><use href="#g45" x="8"/><use href="#g33" x="16"/><use href="#g38" x="24"/><use href="#g30" x="32"/><use href="#g41" x="40"/><use href="#g36" x="48"/><use href="#g41" x="56"/></g></svg>
<svg class="a" style="left:3px;top:112px" width="64" height="16" shape-rendering="crispEdges"><g fill="#808080"><use href="#g30" x="0"/><use href="#g30" x="8"/><use href="#g30" x="16"/><use href="#g33" x="24"/><use href="#g30" x="32"/><use href="#g30" x="40"/><use href="#g30" x="48"/><use href="#g45" x="56"/></g></svg>
<svg class="a" style="left:91px;top:112px" width="88" height="16" shape-rendering="crispEdges"><g fill="#000"><use href="#g36" x="0"/><use href="#g38" x="8"/><use href="#g36" x="24"/><use href="#g33" x="32"/><use href="#g38" x="40"/><use href="#g39" x="48"/><use href="#g44" x="56"/><use href="#g31" x="64"/><use href="#g34" x="72"/><use href="#g46" x="80"/></g></svg>
<svg class="a" style="left:211px;top:112px" width="32" height="16" shape-rendering="crispEdges"><g fill="#0000FF"><use href="#g70" x="0"/><use href="#g75" x="8"/><use href="#g73" x="16"/><use href="#g68" x="24"/></g></svg>
<svg class="a" style="left:275px;top:112px" width="64" height="16" shape-rendering="crispEdges"><g fill="#808000"><use href="#g34" x="0"/><use href="#g46" x="8"/><use href="#g44" x="16"/><use href="#g31" x="24"/><use href="#g38" x="32"/><use href="#g39" x="40"/><use href="#g36" x="48"/><use href="#g33" x="56"/></g></svg>
<svg class="a" style="left:3px;top:128px" width="64" height="16" shape-rendering="crispEdges"><g fill="#808080"><use href="#g30" x="0"/><use href="#g30" x="8"/><use href="#g30" x="16"/><use href="#g33" x="24"/><use href="#g30" x="32"/><use href="#g30" x="40"/><use href="#g31" x="48"/><use href="#g33" x="56"/></g></svg>
<svg class="a" style="left:91px;top:128px" width="88" height="16" shape-rendering="crispEdges"><g fill="#000"><use href="#g36" x="0"/><use href="#g38" x="8"/><use href="#g33" x="24"/><use href="#g32" x="32"/><use href="#g37" x="40"/><use href="#g34" x="48"/><use href="#g39" x="56"/><use href="#g31" x="64"/><use href="#g30" x="72"/><use href="#g43" x="80"/></g></svg>
<svg class="a" style="left:211px;top:128px" width="32" height="16" shape-rendering="crispEdges"><g fill="#0000FF"><use href="#g70" x="0"/><use href="#g75" x="8"/><use href="#g73" x="16"/><use href="#g68" x="24"/></g></svg>
<svg class="a" style="left:275px;top:128px" width="64" height="16" shape-rendering="crispEdges"><g fill="#808000"><use href="#g30" x="0"/><use href="#g43" x="8"/><use href="#g39" x="16"/><use href="#g31" x="24"/><use href="#g37" x="32"/><use href="#g34" x="40"/><use href="#g33" x="48"/><use href="#g32" x="56"/></g></svg>
<svg class="a" style="left:3px;top:144px" width="64" height="16" shape-rendering="crispEdges"><g fill="#808080"><use href="#g30" x="0"/><use href="#g30" x="8"/><use href="#g30" x="16"/><use href="#g33" x="24"/><use href="#g30" x="32"/><use href="#g30" x="40"/><use href="#g31" x="48"/><use href="#g38" x="56"/></g></svg>
<svg class="a" style="left:91px;top:144px" width="32" height="16" shape-rendering="crispEdges"><g fill="#000"><use href="#g38" x="0"/><use href="#g42" x="8"/><use href="#g46" x="16"/><use href="#g34" x="24"/></g></svg>
<svg class="a" style="left:211px;top:144px" width="24" height="16" shape-rendering="crispEdges"><g fill="#000"><use href="#g6d" x="0"/><use href="#g6f" x="8"/><use href="#g76" x="16"/></g></svg>
<svg class="a" style="left:275px;top:144px" width="64" height="16" shape-rendering="crispEdges"><g fill="#000"><use href="#g65" x="0"/><use href="#g73" x="8"/><use href="#g69" x="16"/><use href="#g2c" x="24"/><use href="#g65" x="40"/><use href="#g73" x="48"/><use href="#g70" x="56"/></g></svg>
<svg class="a" style="left:3px;top:160px" width="64" height="16" shape-rendering="crispEdges"><g fill="#808080"><use href="#g30" x="0"/><use href="#g30" x="8"/><use href="#g30" x="16"/><use href="#g33" x="24"/><use href="#g30" x="32"/><use href="#g30" x="40"/><use href="#g31" x="48"/><use href="#g41" x="56"/></g></svg>
<svg class="a" style="left:91px;top:160px" width="56" height="16" shape-rendering="crispEdges"><g fill="#000"><use href="#g38" x="0"/><use href="#g44" x="8"/><use href="#g37" x="16"/><use href="#g45" x="24"/><use href="#g46" x="40"/><use href="#g34" x="48"/></g></svg>
<svg class="a" style="left:211px;top:160px" width="24" height="16" shape-rendering="crispEdges"><g fill="#000"><use href="#g6c" x="0"/><use href="#g65" x="8"/><use href="#g61" x="16"/></g></svg>
<svg class="a" style="left:275px;top:160px" width="176" height="16" shape-rendering="crispEdges"><g fill="#000"><use href="#g65" x="0"/><use href="#g64" x="8"/><use href="#g69" x="16"/><use href="#g2c" x="24"/></g><g fill="#000080"><use href="#g64" x="40"/><use href="#g77" x="48"/><use href="#g6f" x="56"/><use href="#g72" x="64"/><use href="#g64" x="72"/><use href="#g70" x="88"/><use href="#g74" x="96"/><use href="#g72" x="104"/><use href="#g5b" x="120"/><use href="#g65" x="128"/><use href="#g73" x="136"/><use href="#g69" x="144"/><use href="#g2d" x="152"/><use href="#g43" x="160"/><use href="#g5d" x="168"/></g></svg>
<svg class="a" style="left:3px;top:176px" width="64" height="16" shape-rendering="crispEdges"><g fill="#808080"><use href="#g30" x="0"/><use href="#g30" x="8"/><use href="#g30" x="16"/><use href="#g33" x="24"/><use href="#g30" x="32"/><use href="#g30" x="40"/><use href="#g31" x="48"/><use href="#g44" x="56"/></g></svg>
<svg class="a" style="left:91px;top:176px" width="32" height="16" shape-rendering="crispEdges"><g fill="#000"><use href="#g33" x="0"/><use href="#g33" x="8"/><use href="#g44" x="16"/><use href="#g42" x="24"/></g></svg>
<svg class="a" style="left:211px;top:176px" width="24" height="16" shape-rendering="crispEdges"><g fill="#000"><use href="#g78" x="0"/><use href="#g6f" x="8"/><use href="#g72" x="16"/></g></svg>
<svg class="a" style="left:275px;top:176px" width="64" height="16" shape-rendering="crispEdges"><g fill="#000"><use href="#g65" x="0"/><use href="#g62" x="8"/><use href="#g78" x="16"/><use href="#g2c" x="24"/><use href="#g65" x="40"/><use href="#g62" x="48"/><use href="#g78" x="56"/></g></svg>
<svg class="a" style="left:3px;top:192px" width="64" height="16" shape-rendering="crispEdges"><g fill="#808080"><use href="#g30" x="0"/><use href="#g30" x="8"/><use href="#g30" x="16"/><use href="#g33" x="24"/><use href="#g30" x="32"/><use href="#g30" x="40"/><use href="#g31" x="48"/><use href="#g46" x="56"/></g></svg>
<svg class="a" style="left:91px;top:192px" width="40" height="16" shape-rendering="crispEdges"><g fill="#000"><use href="#g42" x="0"/><use href="#g37" x="8"/><use href="#g30" x="24"/><use href="#g34" x="32"/></g></svg>
<svg class="a" style="left:211px;top:192px" width="24" height="16" shape-rendering="crispEdges"><g fill="#000"><use href="#g6d" x="0"/><use href="#g6f" x="8"/><use href="#g76" x="16"/></g></svg>
<svg class="a" style="left:275px;top:192px" width="40" height="16" shape-rendering="crispEdges"><g fill="#000"><use href="#g62" x="0"/><use href="#g68" x="8"/><use href="#g2c" x="16"/></g><g fill="#808000"><use href="#g34" x="32"/></g></svg>
<svg class="a" style="left:3px;top:208px" width="64" height="16" shape-rendering="crispEdges"><g fill="#808080"><use href="#g30" x="0"/><use href="#g30" x="8"/><use href="#g30" x="16"/><use href="#g33" x="24"/><use href="#g30" x="32"/><use href="#g30" x="40"/><use href="#g32" x="48"/><use href="#g31" x="56"/></g></svg>
<svg class="a" style="left:91px;top:208px" width="32" height="16" shape-rendering="crispEdges"><g fill="#000"><use href="#g32" x="0"/><use href="#g42" x="8"/><use href="#g45" x="16"/><use href="#g33" x="24"/></g></svg>
<svg class="a" style="left:211px;top:208px" width="24" height="16" shape-rendering="crispEdges"><g fill="#000"><use href="#g73" x="0"/><use href="#g75" x="8"/><use href="#g62" x="16"/></g></svg>
<svg class="a" style="left:275px;top:208px" width="64" height="16" shape-rendering="crispEdges"><g fill="#000"><use href="#g65" x="0"/><use href="#g73" x="8"/><use href="#g70" x="16"/><use href="#g2c" x="24"/><use href="#g65" x="40"/><use href="#g62" x="48"/><use href="#g78" x="56"/></g></svg>
<svg class="a" style="left:3px;top:224px" width="64" height="16" shape-rendering="crispEdges"><g fill="#808080"><use href="#g30" x="0"/><use href="#g30" x="8"/><use href="#g30" x="16"/><use href="#g33" x="24"/><use href="#g30" x="32"/><use href="#g30" x="40"/><use href="#g32" x="48"/><use href="#g33" x="56"/></g></svg>
<svg class="a" style="left:91px;top:224px" width="80" height="16" shape-rendering="crispEdges"><g fill="#000"><use href="#g36" x="0"/><use href="#g36" x="8"/><use href="#g3a" x="16"/><use href="#g42" x="24"/><use href="#g42" x="32"/><use href="#g33" x="48"/><use href="#g33" x="56"/><use href="#g33" x="64"/><use href="#g32" x="72"/></g></svg>
<svg class="a" style="left:211px;top:224px" width="24" height="16" shape-rendering="crispEdges"><g fill="#000"><use href="#g6d" x="0"/><use href="#g6f" x="8"/><use href="#g76" x="16"/></g></svg>
<svg class="a" style="left:275px;top:224px" width="64" height="16" shape-rendering="crispEdges"><g fill="#000"><use href="#g62" x="0"/><use href="#g78" x="8"/><use href="#g2c" x="16"/></g><g fill="#808000"><use href="#g33" x="32"/><use href="#g32" x="40"/><use href="#g33" x="48"/><use href="#g33" x="56"/></g></svg>
<svg class="a" style="left:3px;top:240px" width="64" height="16" shape-rendering="crispEdges"><g fill="#808080"><use href="#g30" x="0"/><use href="#g30" x="8"/><use href="#g30" x="16"/><use href="#g33" x="24"/><use href="#g30" x="32"/><use href="#g30" x="40"/><use href="#g32" x="48"/><use href="#g37" x="56"/></g></svg>
<svg class="a" style="left:91px;top:240px" width="16" height="16" shape-rendering="crispEdges"><g fill="#000"><use href="#g35" x="0"/><use href="#g33" x="8"/></g></svg>
<svg class="a" style="left:211px;top:240px" width="32" height="16" shape-rendering="crispEdges"><g fill="#0000FF"><use href="#g70" x="0"/><use href="#g75" x="8"/><use href="#g73" x="16"/><use href="#g68" x="24"/></g></svg>
<svg class="a" style="left:275px;top:240px" width="24" height="16" shape-rendering="crispEdges"><g fill="#000"><use href="#g65" x="0"/><use href="#g62" x="8"/><use href="#g78" x="16"/></g></svg>
<svg class="a" style="left:3px;top:256px" width="64" height="16" shape-rendering="crispEdges"><g fill="#808080"><use href="#g30" x="0"/><use href="#g30" x="8"/><use href="#g30" x="16"/><use href="#g33" x="24"/><use href="#g30" x="32"/><use href="#g30" x="40"/><use href="#g32" x="48"/><use href="#g38" x="56"/></g></svg>
<svg class="a" style="left:91px;top:256px" width="88" height="16" shape-rendering="crispEdges"><g fill="#000"><use href="#g36" x="0"/><use href="#g38" x="8"/><use href="#g37" x="24"/><use href="#g35" x="32"/><use href="#g37" x="40"/><use href="#g33" x="48"/><use href="#g36" x="56"/><use href="#g35" x="64"/><use href="#g37" x="72"/><use href="#g32" x="80"/></g></svg>
<svg class="a" style="left:211px;top:256px" width="32" height="16" shape-rendering="crispEdges"><g fill="#0000FF"><use href="#g70" x="0"/><use href="#g75" x="8"/><use href="#g73" x="16"/><use href="#g68" x="24"/></g></svg>
<svg class="a" style="left:275px;top:256px" width="64" height="16" shape-rendering="crispEdges"><g fill="#808000"><use href="#g37" x="0"/><use href="#g32" x="8"/><use href="#g36" x="16"/><use href="#g35" x="24"/><use href="#g37" x="32"/><use href="#g33" x="40"/><use href="#g37" x="48"/><use href="#g35" x="56"/></g></svg>
<svg class="a" style="left:3px;top:272px" width="64" height="16" shape-rendering="crispEdges"><g fill="#808080"><use href="#g30" x="0"/><use href="#g30" x="8"/><use href="#g30" x="16"/><use href="#g33" x="24"/><use href="#g30" x="32"/><use href="#g30" x="40"/><use href="#g32" x="48"/><use href="#g44" x="56"/></g></svg>
<svg class="a" style="left:91px;top:272px" width="16" height="16" shape-rendering="crispEdges"><g fill="#000"><use href="#g35" x="0"/><use href="#g34" x="8"/></g></svg>
<svg class="a" style="left:211px;top:272px" width="32" height="16" shape-rendering="crispEdges"><g fill="#0000FF"><use href="#g70" x="0"/><use href="#g75" x="8"/><use href="#g73" x="16"/><use href="#g68" x="24"/></g></svg>
<svg class="a" style="left:275px;top:272px" width="24" height="16" shape-rendering="crispEdges"><g fill="#000"><use href="#g65" x="0"/><use href="#g73" x="8"/><use href="#g70" x="16"/></g></svg>
<svg class="a" style="left:3px;top:288px" width="64" height="16" shape-rendering="crispEdges"><g fill="#808080"><use href="#g30" x="0"/><use href="#g30" x="8"/><use href="#g30" x="16"/><use href="#g33" x="24"/><use href="#g30" x="32"/><use href="#g30" x="40"/><use href="#g32" x="48"/><use href="#g45" x="56"/></g></svg>
<svg class="a" style="left:91px;top:288px" width="32" height="16" shape-rendering="crispEdges"><g fill="#000"><use href="#g33" x="0"/><use href="#g33" x="8"/><use href="#g44" x="16"/><use href="#g32" x="24"/></g></svg>
<svg class="a" style="left:211px;top:288px" width="24" height="16" shape-rendering="crispEdges"><g fill="#000"><use href="#g78" x="0"/><use href="#g6f" x="8"/><use href="#g72" x="16"/></g></svg>
<svg class="a" style="left:275px;top:288px" width="64" height="16" shape-rendering="crispEdges"><g fill="#000"><use href="#g65" x="0"/><use href="#g64" x="8"/><use href="#g78" x="16"/><use href="#g2c" x="24"/><use href="#g65" x="40"/><use href="#g64" x="48"/><use href="#g78" x="56"/></g></svg>
<svg class="a" style="left:3px;top:304px" width="64" height="16" shape-rendering="crispEdges"><g fill="#808080"><use href="#g30" x="0"/><use href="#g30" x="8"/><use href="#g30" x="16"/><use href="#g33" x="24"/><use href="#g30" x="32"/><use href="#g30" x="40"/><use href="#g33" x="48"/><use href="#g30" x="56"/></g></svg>
<svg class="a" style="left:91px;top:304px" width="80" height="16" shape-rendering="crispEdges"><g fill="#000"><use href="#g36" x="0"/><use href="#g34" x="8"/><use href="#g3a" x="16"/><use href="#g38" x="24"/><use href="#g42" x="32"/><use href="#g35" x="40"/><use href="#g41" x="48"/><use href="#g33" x="64"/><use href="#g30" x="72"/></g></svg>
<svg class="a" style="left:211px;top:304px" width="24" height="16" shape-rendering="crispEdges"><g fill="#000"><use href="#g6d" x="0"/><use href="#g6f" x="8"/><use href="#g76" x="16"/></g></svg>
<svg class="a" style="left:275px;top:304px" width="208" height="16" shape-rendering="crispEdges"><g fill="#000"><use href="#g65" x="0"/><use href="#g62" x="8"/><use href="#g78" x="16"/><use href="#g2c" x="24"/></g><g fill="#000080"><use href="#g64" x="40"/><use href="#g77" x="48"/><use href="#g6f" x="56"/><use href="#g72" x="64"/><use href="#g64" x="72"/><use href="#g70" x="88"/><use href="#g74" x="96"/><use href="#g72" x="104"/><use href="#g66" x="120"/><use href="#g73" x="128"/><use href="#g3a" x="136"/><use href="#g5b" x="144"/><use href="#g65" x="152"/><use href="#g64" x="160"/><use href="#g78" x="168"/><use href="#g2b" x="176"/><use href="#g33" x="184"/><use href="#g30" x="192"/><use href="#g5d" x="200"/></g></svg>
<svg class="a" style="left:3px;top:320px" width="64" height="16" shape-rendering="crispEdges"><g fill="#808080"><use href="#g30" x="0"/><use href="#g30" x="8"/><use href="#g30" x="16"/><use href="#g33" x="24"/><use href="#g30" x="32"/><use href="#g30" x="40"/><use href="#g33" x="48"/><use href="#g34" x="56"/></g></svg>
<svg class="a" style="left:91px;top:320px" width="56" height="16" shape-rendering="crispEdges"><g fill="#000"><use href="#g38" x="0"/><use href="#g42" x="8"/><use href="#g34" x="16"/><use href="#g42" x="24"/><use href="#g30" x="40"/><use href="#g43" x="48"/></g></svg>
<svg class="a" style="left:211px;top:320px" width="24" height="16" shape-rendering="crispEdges"><g fill="#000"><use href="#g6d" x="0"/><use href="#g6f" x="8"/><use href="#g76" x="16"/></g></svg>
<svg class="a" style="left:275px;top:320px" width="176" height="16" shape-rendering="crispEdges"><g fill="#000"><use href="#g65" x="0"/><use href="#g63" x="8"/><use href="#g78" x="16"/><use href="#g2c" x="24"/></g><g fill="#000080"><use href="#g64" x="40"/><use href="#g77" x="48"/><use href="#g6f" x="56"/><use href="#g72" x="64"/><use href="#g64" x="72"/><use href="#g70" x="88"/><use href="#g74" x="96"/><use href="#g72" x="104"/><use href="#g5b" x="120"/><use href="#g65" x="128"/><use href="#g62" x="136"/><use href="#g78" x="144"/><use href="#g2b" x="152"/><use href="#g43" x="160"/><use href="#g5d" x="168"/></g></svg>
<svg class="a" style="left:3px;top:336px" width="64" height="16" shape-rendering="crispEdges"><g fill="#808080"><use href="#g30" x="0"/><use href="#g30" x="8"/><use href="#g30" x="16"/><use href="#g33" x="24"/><use href="#g30" x="32"/><use href="#g30" x="40"/><use href="#g33" x="48"/><use href="#g37" x="56"/></g></svg>
<svg class="a" style="left:91px;top:336px" width="56" height="16" shape-rendering="crispEdges"><g fill="#000"><use href="#g38" x="0"/><use href="#g42" x="8"/><use href="#g34" x="16"/><use href="#g39" x="24"/><use href="#g31" x="40"/><use href="#g43" x="48"/></g></svg>
<svg class="a" style="left:211px;top:336px" width="24" height="16" shape-rendering="crispEdges"><g fill="#000"><use href="#g6d" x="0"/><use href="#g6f" x="8"/><use href="#g76" x="16"/></g></svg>
<svg class="a" style="left:275px;top:336px" width="184" height="16" shape-rendering="crispEdges"><g fill="#000"><use href="#g65" x="0"/><use href="#g63" x="8"/><use href="#g78" x="16"/><use href="#g2c" x="24"/></g><g fill="#000080"><use href="#g64" x="40"/><use href="#g77" x="48"/><use href="#g6f" x="56"/><use href="#g72" x="64"/><use href="#g64" x="72"/><use href="#g70" x="88"/><use href="#g74" x="96"/><use href="#g72" x="104"/><use href="#g5b" x="120"/><use href="#g65" x="128"/><use href="#g63" x="136"/><use href="#g78" x="144"/><use href="#g2b" x="152"/><use href="#g31" x="160"/><use href="#g43" x="168"/><use href="#g5d" x="176"/></g></svg>
<svg class="a" style="left:3px;top:352px" width="64" height="16" shape-rendering="crispEdges"><g fill="#808080"><use href="#g30" x="0"/><use href="#g30" x="8"/><use href="#g30" x="16"/><use href="#g33" x="24"/><use href="#g30" x="32"/><use href="#g30" x="40"/><use href="#g33" x="48"/><use href="#g41" x="56"/></g></svg>
<svg class="a" style="left:91px;top:352px" width="32" height="16" shape-rendering="crispEdges"><g fill="#000"><use href="#g38" x="0"/><use href="#g42" x="8"/><use href="#g30" x="16"/><use href="#g39" x="24"/></g></svg>
<svg class="a" style="left:211px;top:352px" width="24" height="16" shape-rendering="crispEdges"><g fill="#000"><use href="#g6d" x="0"/><use href="#g6f" x="8"/><use href="#g76" x="16"/></g></svg>
<svg class="a" style="left:275px;top:352px" width="160" height="16" shape-rendering="crispEdges"><g fill="#000"><use href="#g65" x="0"/><use href="#g63" x="8"/><use href="#g78" x="16"/><use href="#g2c" x="24"/></g><g fill="#000080"><use href="#g64" x="40"/><use href="#g77" x="48"/><use href="#g6f" x="56"/><use href="#g72" x="64"/><use href="#g64" x="72"/><use href="#g70" x="88"/><use href="#g74" x="96"/><use href="#g72" x="104"/><use href="#g5b" x="120"/><use href="#g65" x="128"/><use href="#g63" x="136"/><use href="#g78" x="144"/><use href="#g5d" x="152"/></g></svg>
<svg class="a" style="left:3px;top:368px" width="64" height="16" shape-rendering="crispEdges"><g fill="#808080"><use href="#g30" x="0"/><use href="#g30" x="8"/><use href="#g30" x="16"/><use href="#g33" x="24"/><use href="#g30" x="32"/><use href="#g30" x="40"/><use href="#g33" x="48"/><use href="#g43" x="56"/></g></svg>
<svg class="a" style="left:91px;top:368px" width="56" height="16" shape-rendering="crispEdges"><g fill="#000"><use href="#g38" x="0"/><use href="#g42" x="8"/><use href="#g36" x="16"/><use href="#g39" x="24"/><use href="#g30" x="40"/><use href="#g38" x="48"/></g></svg>
<svg class="a" style="left:211px;top:368px" width="24" height="16" shape-rendering="crispEdges"><g fill="#000"><use href="#g6d" x="0"/><use href="#g6f" x="8"/><use href="#g76" x="16"/></g></svg>
<svg class="a" style="left:275px;top:368px" width="176" height="16" shape-rendering="crispEdges"><g fill="#000"><use href="#g65" x="0"/><use href="#g62" x="8"/><use href="#g70" x="16"/><use href="#g2c" x="24"/></g><g fill="#000080"><use href="#g64" x="40"/><use href="#g77" x="48"/><use href="#g6f" x="56"/><use href="#g72" x="64"/><use href="#g64" x="72"/><use href="#g70" x="88"/><use href="#g74" x="96"/><use href="#g72" x="104"/><use href="#g5b" x="120"/><use href="#g65" x="128"/><use href="#g63" x="136"/><use href="#g78" x="144"/><use href="#g2b" x="152"/><use href="#g38" x="160"/><use href="#g5d" x="168"/></g></svg>
<svg class="a" style="left:3px;top:384px" width="64" height="16" shape-rendering="crispEdges"><g fill="#808080"><use href="#g30" x="0"/><use href="#g30" x="8"/><use href="#g30" x="16"/><use href="#g33" x="24"/><use href="#g30" x="32"/><use href="#g30" x="40"/><use href="#g33" x="48"/><use href="#g46" x="56"/></g></svg>
<svg class="a" style="left:91px;top:384px" width="16" height="16" shape-rendering="crispEdges"><g fill="#000"><use href="#g41" x="0"/><use href="#g44" x="8"/></g></svg>
<svg class="a" style="left:211px;top:384px" width="32" height="16" shape-rendering="crispEdges"><g fill="#000"><use href="#g6c" x="0"/><use href="#g6f" x="8"/><use href="#g64" x="16"/><use href="#g73" x="24"/></g></svg>
<svg class="a" style="left:275px;top:384px" width="120" height="16" shape-rendering="crispEdges"><g fill="#000080"><use href="#g64" x="0"/><use href="#g77" x="8"/><use href="#g6f" x="16"/><use href="#g72" x="24"/><use href="#g64" x="32"/><use href="#g70" x="48"/><use href="#g74" x="56"/><use href="#g72" x="64"/><use href="#g5b" x="80"/><use href="#g65" x="88"/><use href="#g73" x="96"/><use href="#g69" x="104"/><use href="#g5d" x="112"/></g></svg>
<svg class="a" style="left:3px;top:400px" width="64" height="16" shape-rendering="crispEdges"><g fill="#808080"><use href="#g30" x="0"/><use href="#g30" x="8"/><use href="#g30" x="16"/><use href="#g33" x="24"/><use href="#g30" x="32"/><use href="#g30" x="40"/><use href="#g34" x="48"/><use href="#g30" x="56"/></g></svg>
<svg class="a" style="left:91px;top:400px" width="88" height="16" shape-rendering="crispEdges"><g fill="#000"><use href="#g33" x="0"/><use href="#g44" x="8"/><use href="#g36" x="24"/><use href="#g41" x="32"/><use href="#g30" x="40"/><use href="#g41" x="48"/><use href="#g33" x="56"/><use href="#g38" x="64"/><use href="#g31" x="72"/><use href="#g45" x="80"/></g></svg>
<svg class="a" style="left:211px;top:400px" width="24" height="16" shape-rendering="crispEdges"><g fill="#000"><use href="#g63" x="0"/><use href="#g6d" x="8"/><use href="#g70" x="16"/></g></svg>
<svg class="a" style="left:275px;top:400px" width="104" height="16" shape-rendering="crispEdges"><g fill="#000"><use href="#g65" x="0"/><use href="#g61" x="8"/><use href="#g78" x="16"/><use href="#g2c" x="24"/></g><g fill="#808000"><use href="#g31" x="40"/><use href="#g45" x="48"/><use href="#g33" x="56"/><use href="#g38" x="64"/><use href="#g30" x="72"/><use href="#g41" x="80"/><use href="#g36" x="88"/><use href="#g41" x="96"/></g></svg>
<svg class="a" style="left:3px;top:416px" width="64" height="16" shape-rendering="crispEdges"><g fill="#808080"><use href="#g30" x="0"/><use href="#g30" x="8"/><use href="#g30" x="16"/><use href="#g33" x="24"/><use href="#g30" x="32"/><use href="#g30" x="40"/><use href="#g34" x="48"/><use href="#g35" x="56"/></g></svg>
<div class="a" style="left:75px;top:427px;width:1px;height:1px;background:#000"></div>
<div class="a" style="left:76px;top:428px;width:1px;height:1px;background:#000"></div>
<div class="a" style="left:77px;top:429px;width:1px;height:1px;background:#000"></div>
<div class="a" style="left:78px;top:428px;width:1px;height:1px;background:#000"></div>
<div class="a" style="left:79px;top:427px;width:1px;height:1px;background:#000"></div>
<svg class="a" style="left:91px;top:416px" width="40" height="16" shape-rendering="crispEdges"><g fill="#000"><use href="#g37" x="0"/><use href="#g35" x="8"/><use href="#g30" x="24"/><use href="#g35" x="32"/></g></svg>
<svg class="a" style="left:211px;top:416px" width="24" height="16" shape-rendering="crispEdges"><rect x="0" width="24" height="16" fill="#FFFF00"/><g fill="#FF0000"><use href="#g6a" x="0"/><use href="#g6e" x="8"/><use href="#g7a" x="16"/></g></svg>
<svg class="a" style="left:275px;top:416px" width="112" height="16" shape-rendering="crispEdges"><g fill="#800000"><use href="#g73" x="0"/><use href="#g68" x="8"/><use href="#g6f" x="16"/><use href="#g72" x="24"/><use href="#g74" x="32"/><use href="#g30" x="48"/><use href="#g30" x="56"/><use href="#g30" x="64"/><use href="#g33" x="72"/><use href="#g30" x="80"/><use href="#g30" x="88"/><use href="#g34" x="96"/><use href="#g43" x="104"/></g></svg>
<svg class="a" style="left:3px;top:432px" width="64" height="16" shape-rendering="crispEdges"><g fill="#808080"><use href="#g30" x="0"/><use href="#g30" x="8"/><use href="#g30" x="16"/><use href="#g33" x="24"/><use href="#g30" x="32"/><use href="#g30" x="40"/><use href="#g34" x="48"/><use href="#g37" x="56"/></g></svg>
<svg class="a" style="left:91px;top:432px" width="16" height="16" shape-rendering="crispEdges"><g fill="#000"><use href="#g39" x="0"/><use href="#g35" x="8"/></g></svg>
<svg class="a" style="left:211px;top:432px" width="32" height="16" shape-rendering="crispEdges"><g fill="#000"><use href="#g78" x="0"/><use href="#g63" x="8"/><use href="#g68" x="16"/><use href="#g67" x="24"/></g></svg>
<svg class="a" style="left:275px;top:432px" width="64" height="16" shape-rendering="crispEdges"><g fill="#000"><use href="#g65" x="0"/><use href="#g61" x="8"/><use href="#g78" x="16"/><use href="#g2c" x="24"/><use href="#g65" x="40"/><use href="#g62" x="48"/><use href="#g70" x="56"/></g></svg>
<svg class="a" style="left:3px;top:448px" width="64" height="16" shape-rendering="crispEdges"><g fill="#808080"><use href="#g30" x="0"/><use href="#g30" x="8"/><use href="#g30" x="16"/><use href="#g33" x="24"/><use href="#g30" x="32"/><use href="#g30" x="40"/><use href="#g34" x="48"/><use href="#g38" x="56"/></g></svg>
<svg class="a" style="left:91px;top:448px" width="56" height="16" shape-rendering="crispEdges"><g fill="#000"><use href="#g46" x="0"/><use href="#g46" x="8"/><use href="#g35" x="16"/><use href="#g37" x="24"/><use href="#g46" x="40"/><use href="#g38" x="48"/></g></svg>
<svg class="a" style="left:211px;top:448px" width="32" height="16" shape-rendering="crispEdges"><rect x="0" width="32" height="16" fill="#00FFFF"/><g fill="#000"><use href="#g63" x="0"/><use href="#g61" x="8"/><use href="#g6c" x="16"/><use href="#g6c" x="24"/></g></svg>
<svg class="a" style="left:275px;top:448px" width="136" height="16" shape-rendering="crispEdges"><g fill="#000080"><use href="#g64" x="0"/><use href="#g77" x="8"/><use href="#g6f" x="16"/><use href="#g72" x="24"/><use href="#g64" x="32"/><use href="#g70" x="48"/><use href="#g74" x="56"/><use href="#g72" x="64"/><use href="#g5b" x="80"/><use href="#g65" x="88"/><use href="#g64" x="96"/><use href="#g69" x="104"/><use href="#g2d" x="112"/><use href="#g38" x="120"/><use href="#g5d" x="128"/></g></svg>
<div class="track" style="left:694px;top:0;width:21px;height:463px"></div>
<div class="sbtn" style="left:694px;top:0;width:21px;height:21px"><svg class="a" style="left:4px;top:6px" width="9" height="5"><path d="M4.5 0L9 5H0z" fill="#000"/></svg></div>
<div class="sbtn" style="left:694px;top:21px;width:21px;height:21px"></div>
<div class="sbtn" style="left:694px;top:442px;width:21px;height:21px"><svg class="a" style="left:4px;top:7px" width="9" height="5"><path d="M0 0H9L4.5 5z" fill="#000"/></svg></div>
</div>
<div class="a" style="left:715px;top:22px;width:2px;height:467px;background:#000"></div>
<div class="a" style="left:0;top:487px;width:717px;height:2px;background:#000"></div>
<div class="pane" style="left:0;top:489px;width:715px;height:37px">
<svg class="a" style="left:3px;top:0px" width="176" height="16" shape-rendering="crispEdges"><g fill="#000"><use href="#g64" x="0"/><use href="#g73" x="8"/><use href="#g3a" x="16"/><use href="#g5b" x="24"/><use href="#g30" x="32"/><use href="#g30" x="40"/><use href="#g30" x="48"/><use href="#g33" x="56"/><use href="#g30" x="64"/><use href="#g30" x="72"/><use href="#g30" x="80"/><use href="#g30" x="88"/><use href="#g5d" x="96"/><use href="#g3d" x="104"/><use href="#g30" x="112"/><use href="#g30" x="120"/><use href="#g30" x="128"/><use href="#g30" x="136"/><use href="#g30" x="144"/><use href="#g30" x="152"/><use href="#g46" x="160"/><use href="#g46" x="168"/></g></svg>
</div>
<div class="a" style="left:715px;top:489px;width:2px;height:39px;background:#808080"></div>
<div class="a" style="left:0;top:526px;width:1158px;height:2px;background:#808080"></div>
<div class="pane" style="left:0;top:528px;width:715px;height:288px">
<div class="vl" style="left:70px;top:0;height:288px;background:#808080"></div>
<div class="vl" style="left:166px;top:0;height:288px;background:#C0C0C0"></div>
<div class="vl" style="left:262px;top:0;height:288px;background:#C0C0C0"></div>
<div class="vl" style="left:358px;top:0;height:288px;background:#C0C0C0"></div>
<div class="vl" style="left:454px;top:0;height:288px;background:#808080"></div>
<div class="vl" style="left:590px;top:0;height:288px;background:#808080"></div>
<svg class="a" style="left:3px;top:0px" width="64" height="16" shape-rendering="crispEdges"><g fill="#808080"><use href="#g30" x="0"/><use href="#g30" x="8"/><use href="#g34" x="16"/><use href="#g32" x="24"/><use href="#g34" x="32"/><use href="#g30" x="40"/><use href="#g30" x="48"/><use href="#g30" x="56"/></g></svg>
<svg class="a" style="left:75px;top:0px" width="376" height="16" shape-rendering="crispEdges"><g fill="#808080"><use href="#g30" x="0"/><use href="#g30" x="8"/><use href="#g30" x="24"/><use href="#g30" x="32"/><use href="#g30" x="48"/><use href="#g30" x="56"/><use href="#g30" x="72"/><use href="#g30" x="80"/><use href="#g30" x="96"/><use href="#g30" x="104"/><use href="#g30" x="120"/><use href="#g30" x="128"/><use href="#g30" x="144"/><use href="#g30" x="152"/><use href="#g30" x="168"/><use href="#g30" x="176"/><use href="#g30" x="192"/><use href="#g30" x="200"/><use href="#g30" x="216"/><use href="#g30" x="224"/><use href="#g30" x="240"/><use href="#g30" x="248"/><use href="#g30" x="264"/><use href="#g30" x="272"/><use href="#g30" x="288"/><use href="#g30" x="296"/><use href="#g30" x="312"/><use href="#g30" x="320"/><use href="#g30" x="336"/><use href="#g30" x="344"/><use href="#g30" x="360"/><use href="#g30" x="368"/></g></svg>
<div class="a" style="left:462px;top:10px;width:123px;height:2px;background-image:linear-gradient(to right,#808080 3px,transparent 3px);background-size:8px 2px"></div>
<svg class="a" style="left:3px;top:16px" width="64" height="16" shape-rendering="crispEdges"><g fill="#808080"><use href="#g30" x="0"/><use href="#g30" x="8"/><use href="#g34" x="16"/><use href="#g32" x="24"/><use href="#g34" x="32"/><use href="#g30" x="40"/><use href="#g31" x="48"/><use href="#g30" x="56"/></g></svg>
<svg class="a" style="left:75px;top:16px" width="376" height="16" shape-rendering="crispEdges"><g fill="#808080"><use href="#g30" x="0"/><use href="#g30" x="8"/><use href="#g30" x="24"/><use href="#g30" x="32"/><use href="#g30" x="48"/><use href="#g30" x="56"/><use href="#g30" x="72"/><use href="#g30" x="80"/><use href="#g30" x="96"/><use href="#g30" x="104"/><use href="#g30" x="120"/><use href="#g30" x="128"/><use href="#g30" x="144"/><use href="#g30" x="152"/><use href="#g30" x="168"/><use href="#g30" x="176"/><use href="#g30" x="192"/><use href="#g30" x="200"/><use href="#g30" x="216"/><use href="#g30" x="224"/><use href="#g30" x="240"/><use href="#g30" x="248"/><use href="#g30" x="264"/><use href="#g30" x="272"/><use href="#g30" x="288"/><use href="#g30" x="296"/><use href="#g30" x="312"/><use href="#g30" x="320"/><use href="#g30" x="336"/><use href="#g30" x="344"/><use href="#g30" x="360"/><use href="#g30" x="368"/></g></svg>
<div class="a" style="left:462px;top:26px;width:123px;height:2px;background-image:linear-gradient(to right,#808080 3px,transparent 3px);background-size:8px 2px"></div>
<svg class="a" style="left:3px;top:32px" width="64" height="16" shape-rendering="crispEdges"><g fill="#808080"><use href="#g30" x="0"/><use href="#g30" x="8"/><use href="#g34" x="16"/><use href="#g32" x="24"/><use href="#g34" x="32"/><use href="#g30" x="40"/><use href="#g32" x="48"/><use href="#g30" x="56"/></g></svg>
<svg class="a" style="left:75px;top:32px" width="376" height="16" shape-rendering="crispEdges"><g fill="#808080"><use href="#g30" x="0"/><use href="#g30" x="8"/><use href="#g30" x="24"/><use href="#g30" x="32"/><use href="#g30" x="48"/><use href="#g30" x="56"/><use href="#g30" x="72"/><use href="#g30" x="80"/><use href="#g30" x="96"/><use href="#g30" x="104"/><use href="#g30" x="120"/><use href="#g30" x="128"/><use href="#g30" x="144"/><use href="#g30" x="152"/><use href="#g30" x="168"/><use href="#g30" x="176"/><use href="#g30" x="192"/><use href="#g30" x="200"/><use href="#g30" x="216"/><use href="#g30" x="224"/><use href="#g30" x="240"/><use href="#g30" x="248"/><use href="#g30" x="264"/><use href="#g30" x="272"/><use href="#g30" x="288"/><use href="#g30" x="296"/><use href="#g30" x="312"/><use href="#g30" x="320"/><use href="#g30" x="336"/><use href="#g30" x="344"/><use href="#g30" x="360"/><use href="#g30" x="368"/></g></svg>
<div class="a" style="left:462px;top:42px;width:123px;height:2px;background-image:linear-gradient(to right,#808080 3px,transparent 3px);background-size:8px 2px"></div>
<svg class="a" style="left:3px;top:48px" width="64" height="16" shape-rendering="crispEdges"><g fill="#808080"><use href="#g30" x="0"/><use href="#g30" x="8"/><use href="#g34" x="16"/><use href="#g32" x="24"/><use href="#g34" x="32"/><use href="#g30" x="40"/><use href="#g33" x="48"/><use href="#g30" x="56"/></g></svg>
<svg class="a" style="left:75px;top:48px" width="376" height="16" shape-rendering="crispEdges"><g fill="#808080"><use href="#g30" x="0"/><use href="#g30" x="8"/><use href="#g30" x="24"/><use href="#g30" x="32"/><use href="#g30" x="48"/><use href="#g30" x="56"/><use href="#g30" x="72"/><use href="#g30" x="80"/><use href="#g30" x="96"/><use href="#g30" x="104"/><use href="#g30" x="120"/><use href="#g30" x="128"/><use href="#g30" x="144"/><use href="#g30" x="152"/><use href="#g30" x="168"/><use href="#g30" x="176"/><use href="#g30" x="192"/><use href="#g30" x="200"/><use href="#g30" x="216"/><use href="#g30" x="224"/><use href="#g30" x="240"/><use href="#g30" x="248"/><use href="#g30" x="264"/><use href="#g30" x="272"/><use href="#g30" x="288"/><use href="#g30" x="296"/><use href="#g30" x="312"/><use href="#g30" x="320"/><use href="#g30" x="336"/><use href="#g30" x="344"/><use href="#g30" x="360"/><use href="#g30" x="368"/></g></svg>
<div class="a" style="left:462px;top:58px;width:123px;height:2px;background-image:linear-gradient(to right,#808080 3px,transparent 3px);background-size:8px 2px"></div>
<svg class="a" style="left:3px;top:64px" width="64" height="16" shape-rendering="crispEdges"><g fill="#808080"><use href="#g30" x="0"/><use href="#g30" x="8"/><use href="#g34" x="16"/><use href="#g32" x="24"/><use href="#g34" x="32"/><use href="#g30" x="40"/><use href="#g34" x="48"/><use href="#g30" x="56"/></g></svg>
<svg class="a" style="left:75px;top:64px" width="376" height="16" shape-rendering="crispEdges"><g fill="#808080"><use href="#g30" x="0"/><use href="#g30" x="8"/><use href="#g30" x="24"/><use href="#g30" x="32"/><use href="#g30" x="48"/><use href="#g30" x="56"/><use href="#g30" x="72"/><use href="#g30" x="80"/><use href="#g30" x="96"/><use href="#g30" x="104"/><use href="#g30" x="120"/><use href="#g30" x="128"/><use href="#g30" x="144"/><use href="#g30" x="152"/><use href="#g30" x="168"/><use href="#g30" x="176"/><use href="#g30" x="192"/><use href="#g30" x="200"/><use href="#g30" x="216"/><use href="#g30" x="224"/><use href="#g30" x="240"/><use href="#g30" x="248"/><use href="#g30" x="264"/><use href="#g30" x="272"/><use href="#g30" x="288"/><use href="#g30" x="296"/><use href="#g30" x="312"/><use href="#g30" x="320"/><use href="#g30" x="336"/><use href="#g30" x="344"/><use href="#g30" x="360"/><use href="#g30" x="368"/></g></svg>
<div class="a" style="left:462px;top:74px;width:123px;height:2px;background-image:linear-gradient(to right,#808080 3px,transparent 3px);background-size:8px 2px"></div>
<svg class="a" style="left:3px;top:80px" width="64" height="16" shape-rendering="crispEdges"><g fill="#808080"><use href="#g30" x="0"/><use href="#g30" x="8"/><use href="#g34" x="16"/><use href="#g32" x="24"/><use href="#g34" x="32"/><use href="#g30" x="40"/><use href="#g35" x="48"/><use href="#g30" x="56"/></g></svg>
<svg class="a" style="left:75px;top:80px" width="376" height="16" shape-rendering="crispEdges"><g fill="#808080"><use href="#g30" x="0"/><use href="#g30" x="8"/><use href="#g30" x="24"/><use href="#g30" x="32"/><use href="#g30" x="48"/><use href="#g30" x="56"/><use href="#g30" x="72"/><use href="#g30" x="80"/><use href="#g30" x="96"/><use href="#g30" x="104"/><use href="#g30" x="120"/><use href="#g30" x="128"/><use href="#g30" x="144"/><use href="#g30" x="152"/><use href="#g30" x="168"/><use href="#g30" x="176"/><use href="#g30" x="192"/><use href="#g30" x="200"/><use href="#g30" x="216"/><use href="#g30" x="224"/><use href="#g30" x="240"/><use href="#g30" x="248"/><use href="#g30" x="264"/><use href="#g30" x="272"/><use href="#g30" x="288"/><use href="#g30" x="296"/><use href="#g30" x="312"/><use href="#g30" x="320"/><use href="#g30" x="336"/><use href="#g30" x="344"/><use href="#g30" x="360"/><use href="#g30" x="368"/></g></svg>
<div class="a" style="left:462px;top:90px;width:123px;height:2px;background-image:linear-gradient(to right,#808080 3px,transparent 3px);background-size:8px 2px"></div>
<svg class="a" style="left:3px;top:96px" width="64" height="16" shape-rendering="crispEdges"><g fill="#808080"><use href="#g30" x="0"/><use href="#g30" x="8"/><use href="#g34" x="16"/><use href="#g32" x="24"/><use href="#g34" x="32"/><use href="#g30" x="40"/><use href="#g36" x="48"/><use href="#g30" x="56"/></g></svg>
<svg class="a" style="left:75px;top:96px" width="376" height="16" shape-rendering="crispEdges"><g fill="#808080"><use href="#g30" x="0"/><use href="#g30" x="8"/><use href="#g30" x="24"/><use href="#g30" x="32"/><use href="#g30" x="48"/><use href="#g30" x="56"/><use href="#g30" x="72"/><use href="#g30" x="80"/><use href="#g30" x="96"/><use href="#g30" x="104"/><use href="#g30" x="120"/><use href="#g30" x="128"/><use href="#g30" x="144"/><use href="#g30" x="152"/><use href="#g30" x="168"/><use href="#g30" x="176"/><use href="#g30" x="192"/><use href="#g30" x="200"/><use href="#g30" x="216"/><use href="#g30" x="224"/><use href="#g30" x="240"/><use href="#g30" x="248"/><use href="#g30" x="264"/><use href="#g30" x="272"/><use href="#g30" x="288"/><use href="#g30" x="296"/><use href="#g30" x="312"/><use href="#g30" x="320"/><use href="#g30" x="336"/><use href="#g30" x="344"/><use href="#g30" x="360"/><use href="#g30" x="368"/></g></svg>
<div class="a" style="left:462px;top:106px;width:123px;height:2px;background-image:linear-gradient(to right,#808080 3px,transparent 3px);background-size:8px 2px"></div>
<svg class="a" style="left:3px;top:112px" width="64" height="16" shape-rendering="crispEdges"><g fill="#808080"><use href="#g30" x="0"/><use href="#g30" x="8"/><use href="#g34" x="16"/><use href="#g32" x="24"/><use href="#g34" x="32"/><use href="#g30" x="40"/><use href="#g37" x="48"/><use href="#g30" x="56"/></g></svg>
<svg class="a" style="left:75px;top:112px" width="376" height="16" shape-rendering="crispEdges"><g fill="#808080"><use href="#g30" x="0"/><use href="#g30" x="8"/><use href="#g30" x="24"/><use href="#g30" x="32"/><use href="#g30" x="48"/><use href="#g30" x="56"/><use href="#g30" x="72"/><use href="#g30" x="80"/><use href="#g30" x="96"/><use href="#g30" x="104"/><use href="#g30" x="120"/><use href="#g30" x="128"/><use href="#g30" x="144"/><use href="#g30" x="152"/><use href="#g30" x="168"/><use href="#g30" x="176"/><use href="#g30" x="192"/><use href="#g30" x="200"/><use href="#g30" x="216"/><use href="#g30" x="224"/><use href="#g30" x="240"/><use href="#g30" x="248"/><use href="#g30" x="264"/><use href="#g30" x="272"/><use href="#g30" x="288"/><use href="#g30" x="296"/><use href="#g30" x="312"/><use href="#g30" x="320"/><use href="#g30" x="336"/><use href="#g30" x="344"/><use href="#g30" x="360"/><use href="#g30" x="368"/></g></svg>
<div class="a" style="left:462px;top:122px;width:123px;height:2px;background-image:linear-gradient(to right,#808080 3px,transparent 3px);background-size:8px 2px"></div>
<svg class="a" style="left:3px;top:128px" width="64" height="16" shape-rendering="crispEdges"><g fill="#808080"><use href="#g30" x="0"/><use href="#g30" x="8"/><use href="#g34" x="16"/><use href="#g32" x="24"/><use href="#g34" x="32"/><use href="#g30" x="40"/><use href="#g38" x="48"/><use href="#g30" x="56"/></g></svg>
<svg class="a" style="left:75px;top:128px" width="376" height="16" shape-rendering="crispEdges"><g fill="#808080"><use href="#g30" x="0"/><use href="#g30" x="8"/><use href="#g30" x="24"/><use href="#g30" x="32"/><use href="#g30" x="48"/><use href="#g30" x="56"/><use href="#g30" x="72"/><use href="#g30" x="80"/><use href="#g30" x="96"/><use href="#g30" x="104"/><use href="#g30" x="120"/><use href="#g30" x="128"/><use href="#g30" x="144"/><use href="#g30" x="152"/><use href="#g30" x="168"/><use href="#g30" x="176"/><use href="#g30" x="192"/><use href="#g30" x="200"/><use href="#g30" x="216"/><use href="#g30" x="224"/><use href="#g30" x="240"/><use href="#g30" x="248"/><use href="#g30" x="264"/><use href="#g30" x="272"/><use href="#g30" x="288"/><use href="#g30" x="296"/><use href="#g30" x="312"/><use href="#g30" x="320"/><use href="#g30" x="336"/><use href="#g30" x="344"/><use href="#g30" x="360"/><use href="#g30" x="368"/></g></svg>
<div class="a" style="left:462px;top:138px;width:123px;height:2px;background-image:linear-gradient(to right,#808080 3px,transparent 3px);background-size:8px 2px"></div>
<svg class="a" style="left:3px;top:144px" width="64" height="16" shape-rendering="crispEdges"><g fill="#808080"><use href="#g30" x="0"/><use href="#g30" x="8"/><use href="#g34" x="16"/><use href="#g32" x="24"/><use href="#g34" x="32"/><use href="#g30" x="40"/><use href="#g39" x="48"/><use href="#g30" x="56"/></g></svg>
<svg class="a" style="left:75px;top:144px" width="376" height="16" shape-rendering="crispEdges"><g fill="#808080"><use href="#g30" x="0"/><use href="#g30" x="8"/><use href="#g30" x="24"/><use href="#g30" x="32"/><use href="#g30" x="48"/><use href="#g30" x="56"/><use href="#g30" x="72"/><use href="#g30" x="80"/><use href="#g30" x="96"/><use href="#g30" x="104"/><use href="#g30" x="120"/><use href="#g30" x="128"/><use href="#g30" x="144"/><use href="#g30" x="152"/><use href="#g30" x="168"/><use href="#g30" x="176"/><use href="#g30" x="192"/><use href="#g30" x="200"/><use href="#g30" x="216"/><use href="#g30" x="224"/><use href="#g30" x="240"/><use href="#g30" x="248"/><use href="#g30" x="264"/><use href="#g30" x="272"/><use href="#g30" x="288"/><use href="#g30" x="296"/><use href="#g30" x="312"/><use href="#g30" x="320"/><use href="#g30" x="336"/><use href="#g30" x="344"/><use href="#g30" x="360"/><use href="#g30" x="368"/></g></svg>
<div class="a" style="left:462px;top:154px;width:123px;height:2px;background-image:linear-gradient(to right,#808080 3px,transparent 3px);background-size:8px 2px"></div>
<svg class="a" style="left:3px;top:160px" width="64" height="16" shape-rendering="crispEdges"><g fill="#808080"><use href="#g30" x="0"/><use href="#g30" x="8"/><use href="#g34" x="16"/><use href="#g32" x="24"/><use href="#g34" x="32"/><use href="#g30" x="40"/><use href="#g41" x="48"/><use href="#g30" x="56"/></g></svg>
<svg class="a" style="left:75px;top:160px" width="376" height="16" shape-rendering="crispEdges"><g fill="#808080"><use href="#g30" x="0"/><use href="#g30" x="8"/><use href="#g30" x="24"/><use href="#g30" x="32"/><use href="#g30" x="48"/><use href="#g30" x="56"/><use href="#g30" x="72"/><use href="#g30" x="80"/><use href="#g30" x="96"/><use href="#g30" x="104"/><use href="#g30" x="120"/><use href="#g30" x="128"/><use href="#g30" x="144"/><use href="#g30" x="152"/><use href="#g30" x="168"/><use href="#g30" x="176"/><use href="#g30" x="192"/><use href="#g30" x="200"/><use href="#g30" x="216"/><use href="#g30" x="224"/><use href="#g30" x="240"/><use href="#g30" x="248"/><use href="#g30" x="264"/><use href="#g30" x="272"/><use href="#g30" x="288"/><use href="#g30" x="296"/><use href="#g30" x="312"/><use href="#g30" x="320"/><use href="#g30" x="336"/><use href="#g30" x="344"/><use href="#g30" x="360"/><use href="#g30" x="368"/></g></svg>
<div class="a" style="left:462px;top:170px;width:123px;height:2px;background-image:linear-gradient(to right,#808080 3px,transparent 3px);background-size:8px 2px"></div>
<svg class="a" style="left:3px;top:176px" width="64" height="16" shape-rendering="crispEdges"><g fill="#808080"><use href="#g30" x="0"/><use href="#g30" x="8"/><use href="#g34" x="16"/><use href="#g32" x="24"/><use href="#g34" x="32"/><use href="#g30" x="40"/><use href="#g42" x="48"/><use href="#g30" x="56"/></g></svg>
<svg class="a" style="left:75px;top:176px" width="376" height="16" shape-rendering="crispEdges"><g fill="#808080"><use href="#g30" x="0"/><use href="#g30" x="8"/><use href="#g30" x="24"/><use href="#g30" x="32"/><use href="#g30" x="48"/><use href="#g30" x="56"/><use href="#g30" x="72"/><use href="#g30" x="80"/><use href="#g30" x="96"/><use href="#g30" x="104"/><use href="#g30" x="120"/><use href="#g30" x="128"/><use href="#g30" x="144"/><use href="#g30" x="152"/><use href="#g30" x="168"/><use href="#g30" x="176"/><use href="#g30" x="192"/><use href="#g30" x="200"/><use href="#g30" x="216"/><use href="#g30" x="224"/><use href="#g30" x="240"/><use href="#g30" x="248"/><use href="#g30" x="264"/><use href="#g30" x="272"/><use href="#g30" x="288"/><use href="#g30" x="296"/><use href="#g30" x="312"/><use href="#g30" x="320"/><use href="#g30" x="336"/><use href="#g30" x="344"/><use href="#g30" x="360"/><use href="#g30" x="368"/></g></svg>
<div class="a" style="left:462px;top:186px;width:123px;height:2px;background-image:linear-gradient(to right,#808080 3px,transparent 3px);background-size:8px 2px"></div>
<svg class="a" style="left:3px;top:192px" width="64" height="16" shape-rendering="crispEdges"><g fill="#808080"><use href="#g30" x="0"/><use href="#g30" x="8"/><use href="#g34" x="16"/><use href="#g32" x="24"/><use href="#g34" x="32"/><use href="#g30" x="40"/><use href="#g43" x="48"/><use href="#g30" x="56"/></g></svg>
<svg class="a" style="left:75px;top:192px" width="376" height="16" shape-rendering="crispEdges"><g fill="#808080"><use href="#g30" x="0"/><use href="#g30" x="8"/><use href="#g30" x="24"/><use href="#g30" x="32"/><use href="#g30" x="48"/><use href="#g30" x="56"/><use href="#g30" x="72"/><use href="#g30" x="80"/><use href="#g30" x="96"/><use href="#g30" x="104"/><use href="#g30" x="120"/><use href="#g30" x="128"/><use href="#g30" x="144"/><use href="#g30" x="152"/><use href="#g30" x="168"/><use href="#g30" x="176"/><use href="#g30" x="192"/><use href="#g30" x="200"/><use href="#g30" x="216"/><use href="#g30" x="224"/><use href="#g30" x="240"/><use href="#g30" x="248"/><use href="#g30" x="264"/><use href="#g30" x="272"/><use href="#g30" x="288"/><use href="#g30" x="296"/><use href="#g30" x="312"/><use href="#g30" x="320"/><use href="#g30" x="336"/><use href="#g30" x="344"/><use href="#g30" x="360"/><use href="#g30" x="368"/></g></svg>
<div class="a" style="left:462px;top:202px;width:123px;height:2px;background-image:linear-gradient(to right,#808080 3px,transparent 3px);background-size:8px 2px"></div>
<svg class="a" style="left:3px;top:208px" width="64" height="16" shape-rendering="crispEdges"><g fill="#808080"><use href="#g30" x="0"/><use href="#g30" x="8"/><use href="#g34" x="16"/><use href="#g32" x="24"/><use href="#g34" x="32"/><use href="#g30" x="40"/><use href="#g44" x="48"/><use href="#g30" x="56"/></g></svg>
<svg class="a" style="left:75px;top:208px" width="376" height="16" shape-rendering="crispEdges"><g fill="#808080"><use href="#g30" x="0"/><use href="#g30" x="8"/><use href="#g30" x="24"/><use href="#g30" x="32"/><use href="#g30" x="48"/><use href="#g30" x="56"/><use href="#g30" x="72"/><use href="#g30" x="80"/><use href="#g30" x="96"/><use href="#g30" x="104"/><use href="#g30" x="120"/><use href="#g30" x="128"/><use href="#g30" x="144"/><use href="#g30" x="152"/><use href="#g30" x="168"/><use href="#g30" x="176"/><use href="#g30" x="192"/><use href="#g30" x="200"/><use href="#g30" x="216"/><use href="#g30" x="224"/><use href="#g30" x="240"/><use href="#g30" x="248"/><use href="#g30" x="264"/><use href="#g30" x="272"/><use href="#g30" x="288"/><use href="#g30" x="296"/><use href="#g30" x="312"/><use href="#g30" x="320"/><use href="#g30" x="336"/><use href="#g30" x="344"/><use href="#g30" x="360"/><use href="#g30" x="368"/></g></svg>
<div class="a" style="left:462px;top:218px;width:123px;height:2px;background-image:linear-gradient(to right,#808080 3px,transparent 3px);background-size:8px 2px"></div>
<svg class="a" style="left:3px;top:224px" width="64" height="16" shape-rendering="crispEdges"><g fill="#808080"><use href="#g30" x="0"/><use href="#g30" x="8"/><use href="#g34" x="16"/><use href="#g32" x="24"/><use href="#g34" x="32"/><use href="#g30" x="40"/><use href="#g45" x="48"/><use href="#g30" x="56"/></g></svg>
<svg class="a" style="left:75px;top:224px" width="376" height="16" shape-rendering="crispEdges"><g fill="#808080"><use href="#g30" x="0"/><use href="#g30" x="8"/><use href="#g30" x="24"/><use href="#g30" x="32"/><use href="#g30" x="48"/><use href="#g30" x="56"/><use href="#g30" x="72"/><use href="#g30" x="80"/><use href="#g30" x="96"/><use href="#g30" x="104"/><use href="#g30" x="120"/><use href="#g30" x="128"/><use href="#g30" x="144"/><use href="#g30" x="152"/><use href="#g30" x="168"/><use href="#g30" x="176"/><use href="#g30" x="192"/><use href="#g30" x="200"/><use href="#g30" x="216"/><use href="#g30" x="224"/><use href="#g30" x="240"/><use href="#g30" x="248"/><use href="#g30" x="264"/><use href="#g30" x="272"/><use href="#g30" x="288"/><use href="#g30" x="296"/><use href="#g30" x="312"/><use href="#g30" x="320"/><use href="#g30" x="336"/><use href="#g30" x="344"/><use href="#g30" x="360"/><use href="#g30" x="368"/></g></svg>
<div class="a" style="left:462px;top:234px;width:123px;height:2px;background-image:linear-gradient(to right,#808080 3px,transparent 3px);background-size:8px 2px"></div>
<svg class="a" style="left:3px;top:240px" width="64" height="16" shape-rendering="crispEdges"><g fill="#808080"><use href="#g30" x="0"/><use href="#g30" x="8"/><use href="#g34" x="16"/><use href="#g32" x="24"/><use href="#g34" x="32"/><use href="#g30" x="40"/><use href="#g46" x="48"/><use href="#g30" x="56"/></g></svg>
<svg class="a" style="left:75px;top:240px" width="376" height="16" shape-rendering="crispEdges"><g fill="#808080"><use href="#g30" x="0"/><use href="#g30" x="8"/><use href="#g30" x="24"/><use href="#g30" x="32"/><use href="#g30" x="48"/><use href="#g30" x="56"/><use href="#g30" x="72"/><use href="#g30" x="80"/><use href="#g30" x="96"/><use href="#g30" x="104"/><use href="#g30" x="120"/><use href="#g30" x="128"/><use href="#g30" x="144"/><use href="#g30" x="152"/><use href="#g30" x="168"/><use href="#g30" x="176"/><use href="#g30" x="192"/><use href="#g30" x="200"/><use href="#g30" x="216"/><use href="#g30" x="224"/><use href="#g30" x="240"/><use href="#g30" x="248"/><use href="#g30" x="264"/><use href="#g30" x="272"/><use href="#g30" x="288"/><use href="#g30" x="296"/><use href="#g30" x="312"/><use href="#g30" x="320"/><use href="#g30" x="336"/><use href="#g30" x="344"/><use href="#g30" x="360"/><use href="#g30" x="368"/></g></svg>
<div class="a" style="left:462px;top:250px;width:123px;height:2px;background-image:linear-gradient(to right,#808080 3px,transparent 3px);background-size:8px 2px"></div>
<svg class="a" style="left:3px;top:256px" width="64" height="16" shape-rendering="crispEdges"><g fill="#808080"><use href="#g30" x="0"/><use href="#g30" x="8"/><use href="#g34" x="16"/><use href="#g32" x="24"/><use href="#g34" x="32"/><use href="#g31" x="40"/><use href="#g30" x="48"/><use href="#g30" x="56"/></g></svg>
<svg class="a" style="left:75px;top:256px" width="376" height="16" shape-rendering="crispEdges"><g fill="#808080"><use href="#g30" x="0"/><use href="#g30" x="8"/><use href="#g30" x="24"/><use href="#g30" x="32"/><use href="#g30" x="48"/><use href="#g30" x="56"/><use href="#g30" x="72"/><use href="#g30" x="80"/><use href="#g30" x="96"/><use href="#g30" x="104"/><use href="#g30" x="120"/><use href="#g30" x="128"/><use href="#g30" x="144"/><use href="#g30" x="152"/><use href="#g30" x="168"/><use href="#g30" x="176"/><use href="#g30" x="192"/><use href="#g30" x="200"/><use href="#g30" x="216"/><use href="#g30" x="224"/><use href="#g30" x="240"/><use href="#g30" x="248"/><use href="#g30" x="264"/><use href="#g30" x="272"/><use href="#g30" x="288"/><use href="#g30" x="296"/><use href="#g30" x="312"/><use href="#g30" x="320"/><use href="#g30" x="336"/><use href="#g30" x="344"/><use href="#g30" x="360"/><use href="#g30" x="368"/></g></svg>
<div class="a" style="left:462px;top:266px;width:123px;height:2px;background-image:linear-gradient(to right,#808080 3px,transparent 3px);background-size:8px 2px"></div>
<svg class="a" style="left:3px;top:272px" width="64" height="16" shape-rendering="crispEdges"><g fill="#808080"><use href="#g30" x="0"/><use href="#g30" x="8"/><use href="#g34" x="16"/><use href="#g32" x="24"/><use href="#g34" x="32"/><use href="#g31" x="40"/><use href="#g31" x="48"/><use href="#g30" x="56"/></g></svg>
<svg class="a" style="left:75px;top:272px" width="376" height="16" shape-rendering="crispEdges"><g fill="#808080"><use href="#g30" x="0"/><use href="#g30" x="8"/><use href="#g30" x="24"/><use href="#g30" x="32"/><use href="#g30" x="48"/><use href="#g30" x="56"/><use href="#g30" x="72"/><use href="#g30" x="80"/><use href="#g30" x="96"/><use href="#g30" x="104"/><use href="#g30" x="120"/><use href="#g30" x="128"/><use href="#g30" x="144"/><use href="#g30" x="152"/><use href="#g30" x="168"/><use href="#g30" x="176"/><use href="#g30" x="192"/><use href="#g30" x="200"/><use href="#g30" x="216"/><use href="#g30" x="224"/><use href="#g30" x="240"/><use href="#g30" x="248"/><use href="#g30" x="264"/><use href="#g30" x="272"/><use href="#g30" x="288"/><use href="#g30" x="296"/><use href="#g30" x="312"/><use href="#g30" x="320"/><use href="#g30" x="336"/><use href="#g30" x="344"/><use href="#g30" x="360"/><use href="#g30" x="368"/></g></svg>
<div class="a" style="left:462px;top:282px;width:123px;height:2px;background-image:linear-gradient(to right,#808080 3px,transparent 3px);background-size:8px 2px"></div>
<div class="track" style="left:694px;top:0;width:21px;height:288px"></div>
<div class="sbtn" style="left:694px;top:0;width:21px;height:21px"><svg class="a" style="left:4px;top:6px" width="9" height="5"><path d="M4.5 0L9 5H0z" fill="#000"/></svg></div>
<div class="sbtn" style="left:694px;top:21px;width:21px;height:21px"></div>
<div class="sbtn" style="left:694px;top:267px;width:21px;height:21px"><svg class="a" style="left:4px;top:7px" width="9" height="5"><path d="M0 0H9L4.5 5z" fill="#000"/></svg></div>
</div>
<div class="a" style="left:715px;top:528px;width:2px;height:290px;background:#808080"></div>
<div class="a" style="left:0;top:816px;width:1158px;height:2px;background:#808080"></div>
<div class="pane" style="left:717px;top:24px;width:441px;height:502px">
<div class="a" style="left:0;top:0;width:1px;height:502px;background:#fff"></div>
<div class="a" style="left:0;top:0;width:441px;height:1px;background:#fff"></div>
<div class="a" style="left:1px;top:1px;width:440px;height:17px;background:#C0C0C0"></div>
<div class="a" style="left:1px;top:18px;width:440px;height:1px;background:#808080"></div>
<div class="a" style="left:1px;top:19px;width:440px;height:1px;background:#000"></div>
<svg class="a" style="left:0;top:0" width="60" height="20" shape-rendering="crispEdges"><path fill="#000" d="M10 2h1v1h-1zM11 3h1v1h-1zM6 4h13v1h-13zM6 5h1v1h-1zM11 5h1v1h-1zM18 5h1v1h-1zM5 6h1v1h-1zM7 6h9v1h-9zM17 6h1v1h-1zM10 7h1v1h-1zM12 7h1v1h-1zM9 8h1v1h-1zM13 8h1v1h-1zM8 9h1v1h-1zM14 9h1v1h-1zM5 10h14v1h-14zM15 11h1v1h-1zM8 12h5v1h-5zM15 12h1v1h-1zM8 13h1v1h-1zM12 13h1v1h-1zM15 13h1v1h-1zM8 14h5v1h-5zM15 14h1v1h-1zM8 15h1v1h-1zM13 15h1v1h-1zM15 15h1v1h-1zM14 16h2v1h-2zM14 17h1v1h-1zM26 2h2v1h-2zM26 3h1v1h-1zM21 4h13v1h-13zM25 5h1v1h-1zM25 6h1v1h-1zM24 7h1v1h-1zM26 7h7v1h-7zM23 8h1v1h-1zM31 8h1v1h-1zM23 9h1v1h-1zM30 9h1v1h-1zM22 10h2v1h-2zM30 10h1v1h-1zM21 11h1v1h-1zM23 11h1v1h-1zM25 11h10v1h-10zM20 12h1v1h-1zM23 12h1v1h-1zM30 12h1v1h-1zM23 13h1v1h-1zM30 13h1v1h-1zM23 14h1v1h-1zM30 14h1v1h-1zM23 15h1v1h-1zM30 15h1v1h-1zM23 16h1v1h-1zM28 16h1v1h-1zM30 16h1v1h-1zM23 17h1v1h-1zM29 17h1v1h-1zM38 2h5v1h-5zM45 2h5v1h-5zM38 3h1v1h-1zM42 3h1v1h-1zM45 3h1v1h-1zM49 3h1v1h-1zM38 4h1v1h-1zM42 4h1v1h-1zM45 4h1v1h-1zM49 4h1v1h-1zM38 5h5v1h-5zM45 5h5v1h-5zM43 6h1v1h-1zM47 6h1v1h-1zM43 7h1v1h-1zM48 7h1v1h-1zM36 8h14v1h-14zM41 9h2v1h-2zM44 9h2v1h-2zM39 10h2v1h-2zM47 10h2v1h-2zM36 11h15v1h-15zM38 12h1v1h-1zM42 12h1v1h-1zM44 12h1v1h-1zM48 12h1v1h-1zM38 13h1v1h-1zM42 13h1v1h-1zM44 13h1v1h-1zM48 13h1v1h-1zM38 14h1v1h-1zM42 14h1v1h-1zM44 14h1v1h-1zM48 14h1v1h-1zM38 15h1v1h-1zM42 15h1v1h-1zM44 15h1v1h-1zM48 15h1v1h-1zM38 16h5v1h-5zM44 16h5v1h-5z"/></svg>
<svg class="a" style="left:60px;top:2px" width="40" height="16" shape-rendering="crispEdges"><g fill="#000"><use href="#g28" x="0"/><use href="#g46" x="8"/><use href="#g50" x="16"/><use href="#g55" x="24"/><use href="#g29" x="32"/></g></svg>
<svg class="a" style="left:301px;top:5px" width="7" height="9" shape-rendering="crispEdges"><path d="M4 0h2v1h-2zM3 1h2v1h-2zM2 2h2v1h-2zM1 3h2v1h-2zM0 4h2v1h-2zM1 5h2v1h-2zM2 6h2v1h-2zM3 7h2v1h-2zM4 8h2v1h-2z" fill="#000"/></svg>
<svg class="a" style="left:341px;top:5px" width="7" height="9" shape-rendering="crispEdges"><path d="M4 0h2v1h-2zM3 1h2v1h-2zM2 2h2v1h-2zM1 3h2v1h-2zM0 4h2v1h-2zM1 5h2v1h-2zM2 6h2v1h-2zM3 7h2v1h-2zM4 8h2v1h-2z" fill="#000"/></svg>
<svg class="a" style="left:381px;top:5px" width="7" height="9" shape-rendering="crispEdges"><path d="M4 0h2v1h-2zM3 1h2v1h-2zM2 2h2v1h-2zM1 3h2v1h-2zM0 4h2v1h-2zM1 5h2v1h-2zM2 6h2v1h-2zM3 7h2v1h-2zM4 8h2v1h-2z" fill="#000"/></svg>
<svg class="a" style="left:421px;top:5px" width="7" height="9" shape-rendering="crispEdges"><path d="M4 0h2v1h-2zM3 1h2v1h-2zM2 2h2v1h-2zM1 3h2v1h-2zM0 4h2v1h-2zM1 5h2v1h-2zM2 6h2v1h-2zM3 7h2v1h-2zM4 8h2v1h-2z" fill="#000"/></svg>
<svg class="a" style="left:4px;top:20px" width="96" height="16" shape-rendering="crispEdges"><g fill="#808080"><use href="#g45" x="0"/><use href="#g41" x="8"/><use href="#g58" x="16"/></g><g fill="#808080"><use href="#g30" x="32"/><use href="#g30" x="40"/><use href="#g30" x="48"/><use href="#g33" x="56"/><use href="#g30" x="64"/><use href="#g30" x="72"/><use href="#g30" x="80"/><use href="#g30" x="88"/></g></svg>
<svg class="a" style="left:4px;top:36px" width="96" height="16" shape-rendering="crispEdges"><g fill="#808080"><use href="#g45" x="0"/><use href="#g43" x="8"/><use href="#g58" x="16"/></g><g fill="#808080"><use href="#g30" x="32"/><use href="#g30" x="40"/><use href="#g30" x="48"/><use href="#g30" x="56"/><use href="#g30" x="64"/><use href="#g30" x="72"/><use href="#g30" x="80"/><use href="#g30" x="88"/></g></svg>
<svg class="a" style="left:4px;top:52px" width="96" height="16" shape-rendering="crispEdges"><g fill="#808080"><use href="#g45" x="0"/><use href="#g44" x="8"/><use href="#g58" x="16"/></g><g fill="#808080"><use href="#g30" x="32"/><use href="#g30" x="40"/><use href="#g30" x="48"/><use href="#g30" x="56"/><use href="#g30" x="64"/><use href="#g30" x="72"/><use href="#g30" x="80"/><use href="#g33" x="88"/></g></svg>
<svg class="a" style="left:4px;top:68px" width="96" height="16" shape-rendering="crispEdges"><g fill="#808080"><use href="#g45" x="0"/><use href="#g42" x="8"/><use href="#g58" x="16"/></g><g fill="#808080"><use href="#g30" x="32"/><use href="#g30" x="40"/><use href="#g31" x="48"/><use href="#g32" x="56"/><use href="#g46" x="64"/><use href="#g45" x="72"/><use href="#g42" x="80"/><use href="#g34" x="88"/></g></svg>
<svg class="a" style="left:4px;top:84px" width="96" height="16" shape-rendering="crispEdges"><g fill="#808080"><use href="#g45" x="0"/><use href="#g53" x="8"/><use href="#g50" x="16"/></g><g fill="#FF0000"><use href="#g30" x="32"/><use href="#g30" x="40"/><use href="#g31" x="48"/><use href="#g32" x="56"/><use href="#g46" x="64"/><use href="#g45" x="72"/><use href="#g41" x="80"/><use href="#g43" x="88"/></g></svg>
<svg class="a" style="left:4px;top:100px" width="232" height="16" shape-rendering="crispEdges"><g fill="#808080"><use href="#g45" x="0"/><use href="#g42" x="8"/><use href="#g50" x="16"/></g><g fill="#808080"><use href="#g37" x="32"/><use href="#g43" x="40"/><use href="#g41" x="48"/><use href="#g36" x="56"/><use href="#g37" x="64"/><use href="#g38" x="72"/><use href="#g35" x="80"/><use href="#g46" x="88"/></g><g fill="#808080"><use href="#g73" x="104"/><use href="#g68" x="112"/><use href="#g65" x="120"/><use href="#g6c" x="128"/><use href="#g6c" x="136"/><use href="#g33" x="144"/><use href="#g32" x="152"/><use href="#g2e" x="160"/><use href="#g37" x="168"/><use href="#g43" x="176"/><use href="#g41" x="184"/><use href="#g36" x="192"/><use href="#g37" x="200"/><use href="#g38" x="208"/><use href="#g35" x="216"/><use href="#g46" x="224"/></g></svg>
<svg class="a" style="left:4px;top:116px" width="96" height="16" shape-rendering="crispEdges"><g fill="#808080"><use href="#g45" x="0"/><use href="#g53" x="8"/><use href="#g49" x="16"/></g><g fill="#808080"><use href="#g30" x="32"/><use href="#g41" x="40"/><use href="#g36" x="48"/><use href="#g41" x="56"/><use href="#g36" x="64"/><use href="#g38" x="72"/><use href="#g46" x="80"/><use href="#g43" x="88"/></g></svg>
<svg class="a" style="left:4px;top:132px" width="96" height="16" shape-rendering="crispEdges"><g fill="#808080"><use href="#g45" x="0"/><use href="#g44" x="8"/><use href="#g49" x="16"/></g><g fill="#808080"><use href="#g36" x="32"/><use href="#g33" x="40"/><use href="#g36" x="48"/><use href="#g38" x="56"/><use href="#g31" x="64"/><use href="#g45" x="72"/><use href="#g33" x="80"/><use href="#g38" x="88"/></g></svg>
<svg class="a" style="left:4px;top:156px" width="96" height="16" shape-rendering="crispEdges"><g fill="#808080"><use href="#g45" x="0"/><use href="#g49" x="8"/><use href="#g50" x="16"/></g><g fill="#FF0000"><use href="#g30" x="32"/><use href="#g30" x="40"/><use href="#g30" x="48"/><use href="#g33" x="56"/><use href="#g30" x="64"/><use href="#g30" x="72"/><use href="#g30" x="80"/><use href="#g30" x="88"/></g></svg>
<svg class="a" style="left:4px;top:180px" width="232" height="16" shape-rendering="crispEdges"><g fill="#808080"><use href="#g43" x="0"/><use href="#g30" x="16"/><use href="#g45" x="40"/><use href="#g53" x="48"/><use href="#g30" x="64"/><use href="#g30" x="72"/><use href="#g32" x="80"/><use href="#g33" x="88"/><use href="#g33" x="104"/><use href="#g32" x="112"/></g><g fill="#808080"><use href="#g30" x="144"/><use href="#g28" x="152"/><use href="#g46" x="160"/><use href="#g46" x="168"/><use href="#g46" x="176"/><use href="#g46" x="184"/><use href="#g46" x="192"/><use href="#g46" x="200"/><use href="#g46" x="208"/><use href="#g46" x="216"/><use href="#g29" x="224"/></g></svg>
<svg class="a" style="left:124px;top:180px" width="16" height="16" shape-rendering="crispEdges"><path fill="#808080" d="M4 0h1v1h-1zM7 0h1v1h-1zM5 1h1v1h-1zM8 1h2v1h-2zM3 2h1v1h-1zM9 2h1v1h-1zM3 3h1v1h-1zM5 3h9v1h-9zM2 4h2v1h-2zM1 5h1v1h-1zM3 5h1v1h-1zM5 5h1v1h-1zM11 5h1v1h-1zM1 6h1v1h-1zM3 6h1v1h-1zM6 6h1v1h-1zM11 6h2v1h-2zM0 7h1v1h-1zM3 7h1v1h-1zM6 7h1v1h-1zM11 7h1v1h-1zM0 8h1v1h-1zM3 8h1v1h-1zM7 8h1v1h-1zM11 8h1v1h-1zM3 9h1v1h-1zM7 9h1v1h-1zM10 9h1v1h-1zM3 10h1v1h-1zM7 10h1v1h-1zM10 10h1v1h-1zM3 11h1v1h-1zM10 11h1v1h-1zM3 12h1v1h-1zM9 12h1v1h-1zM3 13h12v1h-12zM3 14h1v1h-1z"/></svg>
<svg class="a" style="left:4px;top:196px" width="232" height="16" shape-rendering="crispEdges"><g fill="#808080"><use href="#g50" x="0"/><use href="#g30" x="16"/><use href="#g43" x="40"/><use href="#g53" x="48"/><use href="#g30" x="64"/><use href="#g30" x="72"/><use href="#g31" x="80"/><use href="#g42" x="88"/><use href="#g33" x="104"/><use href="#g32" x="112"/></g><g fill="#808080"><use href="#g30" x="144"/><use href="#g28" x="152"/><use href="#g46" x="160"/><use href="#g46" x="168"/><use href="#g46" x="176"/><use href="#g46" x="184"/><use href="#g46" x="192"/><use href="#g46" x="200"/><use href="#g46" x="208"/><use href="#g46" x="216"/><use href="#g29" x="224"/></g></svg>
<svg class="a" style="left:124px;top:196px" width="16" height="16" shape-rendering="crispEdges"><path fill="#808080" d="M4 0h1v1h-1zM7 0h1v1h-1zM5 1h1v1h-1zM8 1h2v1h-2zM3 2h1v1h-1zM9 2h1v1h-1zM3 3h1v1h-1zM5 3h9v1h-9zM2 4h2v1h-2zM1 5h1v1h-1zM3 5h1v1h-1zM5 5h1v1h-1zM11 5h1v1h-1zM1 6h1v1h-1zM3 6h1v1h-1zM6 6h1v1h-1zM11 6h2v1h-2zM0 7h1v1h-1zM3 7h1v1h-1zM6 7h1v1h-1zM11 7h1v1h-1zM0 8h1v1h-1zM3 8h1v1h-1zM7 8h1v1h-1zM11 8h1v1h-1zM3 9h1v1h-1zM7 9h1v1h-1zM10 9h1v1h-1zM3 10h1v1h-1zM7 10h1v1h-1zM10 10h1v1h-1zM3 11h1v1h-1zM10 11h1v1h-1zM3 12h1v1h-1zM9 12h1v1h-1zM3 13h12v1h-12zM3 14h1v1h-1z"/></svg>
<svg class="a" style="left:4px;top:212px" width="232" height="16" shape-rendering="crispEdges"><g fill="#808080"><use href="#g41" x="0"/><use href="#g30" x="16"/><use href="#g53" x="40"/><use href="#g53" x="48"/><use href="#g30" x="64"/><use href="#g30" x="72"/><use href="#g32" x="80"/><use href="#g33" x="88"/><use href="#g33" x="104"/><use href="#g32" x="112"/></g><g fill="#808080"><use href="#g30" x="144"/><use href="#g28" x="152"/><use href="#g46" x="160"/><use href="#g46" x="168"/><use href="#g46" x="176"/><use href="#g46" x="184"/><use href="#g46" x="192"/><use href="#g46" x="200"/><use href="#g46" x="208"/><use href="#g46" x="216"/><use href="#g29" x="224"/></g></svg>
<svg class="a" style="left:124px;top:212px" width="16" height="16" shape-rendering="crispEdges"><path fill="#808080" d="M4 0h1v1h-1zM7 0h1v1h-1zM5 1h1v1h-1zM8 1h2v1h-2zM3 2h1v1h-1zM9 2h1v1h-1zM3 3h1v1h-1zM5 3h9v1h-9zM2 4h2v1h-2zM1 5h1v1h-1zM3 5h1v1h-1zM5 5h1v1h-1zM11 5h1v1h-1zM1 6h1v1h-1zM3 6h1v1h-1zM6 6h1v1h-1zM11 6h2v1h-2zM0 7h1v1h-1zM3 7h1v1h-1zM6 7h1v1h-1zM11 7h1v1h-1zM0 8h1v1h-1zM3 8h1v1h-1zM7 8h1v1h-1zM11 8h1v1h-1zM3 9h1v1h-1zM7 9h1v1h-1zM10 9h1v1h-1zM3 10h1v1h-1zM7 10h1v1h-1zM10 10h1v1h-1zM3 11h1v1h-1zM10 11h1v1h-1zM3 12h1v1h-1zM9 12h1v1h-1zM3 13h12v1h-12zM3 14h1v1h-1z"/></svg>
<svg class="a" style="left:4px;top:228px" width="232" height="16" shape-rendering="crispEdges"><g fill="#808080"><use href="#g5a" x="0"/><use href="#g30" x="16"/><use href="#g44" x="40"/><use href="#g53" x="48"/><use href="#g30" x="64"/><use href="#g30" x="72"/><use href="#g32" x="80"/><use href="#g33" x="88"/><use href="#g33" x="104"/><use href="#g32" x="112"/></g><g fill="#808080"><use href="#g30" x="144"/><use href="#g28" x="152"/><use href="#g46" x="160"/><use href="#g46" x="168"/><use href="#g46" x="176"/><use href="#g46" x="184"/><use href="#g46" x="192"/><use href="#g46" x="200"/><use href="#g46" x="208"/><use href="#g46" x="216"/><use href="#g29" x="224"/></g></svg>
<svg class="a" style="left:124px;top:228px" width="16" height="16" shape-rendering="crispEdges"><path fill="#808080" d="M4 0h1v1h-1zM7 0h1v1h-1zM5 1h1v1h-1zM8 1h2v1h-2zM3 2h1v1h-1zM9 2h1v1h-1zM3 3h1v1h-1zM5 3h9v1h-9zM2 4h2v1h-2zM1 5h1v1h-1zM3 5h1v1h-1zM5 5h1v1h-1zM11 5h1v1h-1zM1 6h1v1h-1zM3 6h1v1h-1zM6 6h1v1h-1zM11 6h2v1h-2zM0 7h1v1h-1zM3 7h1v1h-1zM6 7h1v1h-1zM11 7h1v1h-1zM0 8h1v1h-1zM3 8h1v1h-1zM7 8h1v1h-1zM11 8h1v1h-1zM3 9h1v1h-1zM7 9h1v1h-1zM10 9h1v1h-1zM3 10h1v1h-1zM7 10h1v1h-1zM10 10h1v1h-1zM3 11h1v1h-1zM10 11h1v1h-1zM3 12h1v1h-1zM9 12h1v1h-1zM3 13h12v1h-12zM3 14h1v1h-1z"/></svg>
<svg class="a" style="left:4px;top:244px" width="248" height="16" shape-rendering="crispEdges"><g fill="#808080"><use href="#g53" x="0"/><use href="#g30" x="16"/><use href="#g46" x="40"/><use href="#g53" x="48"/><use href="#g30" x="64"/><use href="#g30" x="72"/><use href="#g33" x="80"/><use href="#g42" x="88"/><use href="#g33" x="104"/><use href="#g32" x="112"/></g><g fill="#808080"><use href="#g37" x="144"/><use href="#g46" x="152"/><use href="#g46" x="160"/><use href="#g44" x="168"/><use href="#g46" x="176"/><use href="#g30" x="184"/><use href="#g30" x="192"/><use href="#g30" x="200"/><use href="#g28" x="208"/><use href="#g46" x="216"/><use href="#g46" x="224"/><use href="#g46" x="232"/><use href="#g29" x="240"/></g></svg>
<svg class="a" style="left:124px;top:244px" width="16" height="16" shape-rendering="crispEdges"><path fill="#808080" d="M4 0h1v1h-1zM7 0h1v1h-1zM5 1h1v1h-1zM8 1h2v1h-2zM3 2h1v1h-1zM9 2h1v1h-1zM3 3h1v1h-1zM5 3h9v1h-9zM2 4h2v1h-2zM1 5h1v1h-1zM3 5h1v1h-1zM5 5h1v1h-1zM11 5h1v1h-1zM1 6h1v1h-1zM3 6h1v1h-1zM6 6h1v1h-1zM11 6h2v1h-2zM0 7h1v1h-1zM3 7h1v1h-1zM6 7h1v1h-1zM11 7h1v1h-1zM0 8h1v1h-1zM3 8h1v1h-1zM7 8h1v1h-1zM11 8h1v1h-1zM3 9h1v1h-1zM7 9h1v1h-1zM10 9h1v1h-1zM3 10h1v1h-1zM7 10h1v1h-1zM10 10h1v1h-1zM3 11h1v1h-1zM10 11h1v1h-1zM3 12h1v1h-1zM9 12h1v1h-1zM3 13h12v1h-12zM3 14h1v1h-1z"/></svg>
<svg class="a" style="left:4px;top:260px" width="136" height="16" shape-rendering="crispEdges"><g fill="#808080"><use href="#g54" x="0"/><use href="#g30" x="16"/><use href="#g47" x="40"/><use href="#g53" x="48"/><use href="#g30" x="64"/><use href="#g30" x="72"/><use href="#g30" x="80"/><use href="#g30" x="88"/><use href="#g4e" x="104"/><use href="#g55" x="112"/><use href="#g4c" x="120"/><use href="#g4c" x="128"/></g></svg>
<svg class="a" style="left:4px;top:276px" width="24" height="16" shape-rendering="crispEdges"><g fill="#808080"><use href="#g44" x="0"/><use href="#g30" x="16"/></g></svg>
<svg class="a" style="left:4px;top:292px" width="416" height="16" shape-rendering="crispEdges"><g fill="#808080"><use href="#g4f" x="0"/><use href="#g30" x="16"/><use href="#g4c" x="40"/><use href="#g61" x="48"/><use href="#g73" x="56"/><use href="#g74" x="64"/><use href="#g45" x="72"/><use href="#g72" x="80"/><use href="#g72" x="88"/><use href="#g45" x="104"/><use href="#g52" x="112"/><use href="#g52" x="120"/><use href="#g4f" x="128"/><use href="#g52" x="136"/><use href="#g5f" x="144"/><use href="#g4e" x="152"/><use href="#g4f" x="160"/><use href="#g5f" x="168"/><use href="#g49" x="176"/><use href="#g4d" x="184"/><use href="#g50" x="192"/><use href="#g45" x="200"/><use href="#g52" x="208"/><use href="#g53" x="216"/><use href="#g4f" x="224"/><use href="#g4e" x="232"/><use href="#g41" x="240"/><use href="#g54" x="248"/><use href="#g49" x="256"/><use href="#g4f" x="264"/><use href="#g4e" x="272"/><use href="#g5f" x="280"/><use href="#g54" x="288"/><use href="#g4f" x="296"/><use href="#g4b" x="304"/><use href="#g45" x="312"/><use href="#g4e" x="320"/><use href="#g28" x="336"/><use href="#g30" x="344"/><use href="#g30" x="352"/><use href="#g30" x="360"/><use href="#g30" x="368"/><use href="#g30" x="376"/><use href="#g35" x="384"/><use href="#g31" x="392"/><use href="#g44" x="400"/><use href="#g29" x="408"/></g></svg>
<svg class="a" style="left:4px;top:316px" width="288" height="16" shape-rendering="crispEdges"><g fill="#808080"><use href="#g45" x="0"/><use href="#g46" x="8"/><use href="#g4c" x="16"/><use href="#g30" x="32"/><use href="#g30" x="40"/><use href="#g30" x="48"/><use href="#g30" x="56"/><use href="#g30" x="64"/><use href="#g32" x="72"/><use href="#g30" x="80"/><use href="#g32" x="88"/><use href="#g28" x="104"/><use href="#g4e" x="112"/><use href="#g4f" x="120"/><use href="#g2c" x="128"/><use href="#g4e" x="136"/><use href="#g42" x="144"/><use href="#g2c" x="152"/><use href="#g4e" x="160"/><use href="#g45" x="168"/><use href="#g2c" x="176"/><use href="#g41" x="184"/><use href="#g2c" x="192"/><use href="#g4e" x="200"/><use href="#g53" x="208"/><use href="#g2c" x="216"/><use href="#g50" x="224"/><use href="#g4f" x="232"/><use href="#g2c" x="240"/><use href="#g47" x="248"/><use href="#g45" x="256"/><use href="#g2c" x="264"/><use href="#g47" x="272"/><use href="#g29" x="280"/></g></svg>
<svg class="a" style="left:4px;top:340px" width="104" height="16" shape-rendering="crispEdges"><g fill="#808080"><use href="#g53" x="0"/><use href="#g54" x="8"/><use href="#g30" x="16"/><use href="#g65" x="32"/><use href="#g6d" x="40"/><use href="#g70" x="48"/><use href="#g74" x="56"/><use href="#g79" x="64"/><use href="#g30" x="80"/><use href="#g2e" x="88"/><use href="#g30" x="96"/></g></svg>
<svg class="a" style="left:4px;top:356px" width="104" height="16" shape-rendering="crispEdges"><g fill="#808080"><use href="#g53" x="0"/><use href="#g54" x="8"/><use href="#g31" x="16"/><use href="#g65" x="32"/><use href="#g6d" x="40"/><use href="#g70" x="48"/><use href="#g74" x="56"/><use href="#g79" x="64"/><use href="#g30" x="80"/><use href="#g2e" x="88"/><use href="#g30" x="96"/></g></svg>
<svg class="a" style="left:4px;top:372px" width="104" height="16" shape-rendering="crispEdges"><g fill="#808080"><use href="#g53" x="0"/><use href="#g54" x="8"/><use href="#g32" x="16"/><use href="#g65" x="32"/><use href="#g6d" x="40"/><use href="#g70" x="48"/><use href="#g74" x="56"/><use href="#g79" x="64"/><use href="#g30" x="80"/><use href="#g2e" x="88"/><use href="#g30" x="96"/></g></svg>
<svg class="a" style="left:4px;top:388px" width="104" height="16" shape-rendering="crispEdges"><g fill="#808080"><use href="#g53" x="0"/><use href="#g54" x="8"/><use href="#g33" x="16"/><use href="#g65" x="32"/><use href="#g6d" x="40"/><use href="#g70" x="48"/><use href="#g74" x="56"/><use href="#g79" x="64"/><use href="#g30" x="80"/><use href="#g2e" x="88"/><use href="#g30" x="96"/></g></svg>
<svg class="a" style="left:4px;top:404px" width="104" height="16" shape-rendering="crispEdges"><g fill="#808080"><use href="#g53" x="0"/><use href="#g54" x="8"/><use href="#g34" x="16"/><use href="#g65" x="32"/><use href="#g6d" x="40"/><use href="#g70" x="48"/><use href="#g74" x="56"/><use href="#g79" x="64"/><use href="#g30" x="80"/><use href="#g2e" x="88"/><use href="#g30" x="96"/></g></svg>
<svg class="a" style="left:4px;top:420px" width="104" height="16" shape-rendering="crispEdges"><g fill="#808080"><use href="#g53" x="0"/><use href="#g54" x="8"/><use href="#g35" x="16"/><use href="#g65" x="32"/><use href="#g6d" x="40"/><use href="#g70" x="48"/><use href="#g74" x="56"/><use href="#g79" x="64"/><use href="#g30" x="80"/><use href="#g2e" x="88"/><use href="#g30" x="96"/></g></svg>
<svg class="a" style="left:4px;top:436px" width="248" height="16" shape-rendering="crispEdges"><g fill="#808080"><use href="#g53" x="0"/><use href="#g54" x="8"/><use href="#g36" x="16"/><use href="#g65" x="32"/><use href="#g6d" x="40"/><use href="#g70" x="48"/><use href="#g74" x="56"/><use href="#g79" x="64"/><use href="#g31" x="80"/><use href="#g2e" x="88"/><use href="#g30" x="96"/><use href="#g30" x="104"/><use href="#g30" x="112"/><use href="#g30" x="120"/><use href="#g30" x="128"/><use href="#g30" x="136"/><use href="#g30" x="144"/><use href="#g30" x="152"/><use href="#g30" x="160"/><use href="#g30" x="168"/><use href="#g30" x="176"/><use href="#g30" x="184"/><use href="#g30" x="192"/><use href="#g30" x="200"/><use href="#g30" x="208"/><use href="#g30" x="216"/><use href="#g30" x="224"/><use href="#g30" x="232"/><use href="#g30" x="240"/></g></svg>
<svg class="a" style="left:4px;top:452px" width="248" height="16" shape-rendering="crispEdges"><g fill="#808080"><use href="#g53" x="0"/><use href="#g54" x="8"/><use href="#g37" x="16"/><use href="#g65" x="32"/><use href="#g6d" x="40"/><use href="#g70" x="48"/><use href="#g74" x="56"/><use href="#g79" x="64"/><use href="#g31" x="80"/><use href="#g2e" x="88"/><use href="#g30" x="96"/><use href="#g30" x="104"/><use href="#g30" x="112"/><use href="#g30" x="120"/><use href="#g30" x="128"/><use href="#g30" x="136"/><use href="#g30" x="144"/><use href="#g30" x="152"/><use href="#g30" x="160"/><use href="#g30" x="168"/><use href="#g30" x="176"/><use href="#g30" x="184"/><use href="#g30" x="192"/><use href="#g30" x="200"/><use href="#g30" x="208"/><use href="#g30" x="216"/><use href="#g30" x="224"/><use href="#g30" x="232"/><use href="#g30" x="240"/></g></svg>
<svg class="a" style="left:4px;top:468px" width="344" height="16" shape-rendering="crispEdges"><g fill="#808080"><use href="#g33" x="120"/><use href="#g32" x="136"/><use href="#g31" x="152"/><use href="#g30" x="168"/><use href="#g45" x="224"/><use href="#g53" x="240"/><use href="#g50" x="256"/><use href="#g55" x="272"/><use href="#g4f" x="288"/><use href="#g5a" x="304"/><use href="#g44" x="320"/><use href="#g49" x="336"/></g></svg>
<svg class="a" style="left:4px;top:484px" width="392" height="16" shape-rendering="crispEdges"><g fill="#808080"><use href="#g46" x="0"/><use href="#g53" x="8"/><use href="#g54" x="16"/><use href="#g34" x="32"/><use href="#g30" x="40"/><use href="#g32" x="48"/><use href="#g30" x="56"/><use href="#g43" x="80"/><use href="#g6f" x="88"/><use href="#g6e" x="96"/><use href="#g64" x="104"/><use href="#g31" x="120"/><use href="#g30" x="136"/><use href="#g30" x="152"/><use href="#g30" x="168"/><use href="#g45" x="192"/><use href="#g72" x="200"/><use href="#g72" x="208"/><use href="#g30" x="224"/><use href="#g30" x="240"/><use href="#g31" x="256"/><use href="#g30" x="272"/><use href="#g30" x="288"/><use href="#g30" x="304"/><use href="#g30" x="320"/><use href="#g30" x="336"/><use href="#g28" x="360"/><use href="#g45" x="368"/><use href="#g51" x="376"/><use href="#g29" x="384"/></g></svg>
<div class="a" style="left:199px;top:500px;width:1px;height:2px;background:#808080"></div>
<div class="a" style="left:205px;top:500px;width:1px;height:2px;background:#808080"></div>
<div class="a" style="left:212px;top:501px;width:6px;height:1px;background:#808080"></div>
<div class="a" style="left:219px;top:501px;width:6px;height:1px;background:#808080"></div>
</div>
<div class="pane" style="left:717px;top:528px;width:441px;height:288px">
<div class="a" style="left:0;top:0;width:71px;height:16px;background:#000"></div>
<div class="a" style="left:72px;top:0;width:369px;height:16px;background:#A6CAF0"></div>
<div class="vl" style="left:71px;top:0;height:288px"></div>
<div class="vl" style="left:151px;top:0;height:288px"></div>
<svg class="a" style="left:4px;top:0px" width="64" height="16" shape-rendering="crispEdges"><g fill="#fff"><use href="#g30" x="0"/><use href="#g30" x="8"/><use href="#g31" x="16"/><use href="#g32" x="24"/><use href="#g46" x="32"/><use href="#g45" x="40"/><use href="#g41" x="48"/><use href="#g43" x="56"/></g></svg>
<svg class="a" style="left:84px;top:0px" width="64" height="16" shape-rendering="crispEdges"><g fill="#808080"><use href="#g30" x="0"/><use href="#g30" x="8"/><use href="#g30" x="16"/><use href="#g33" x="24"/><use href="#g30" x="32"/><use href="#g30" x="40"/><use href="#g30" x="48"/><use href="#g30" x="56"/></g></svg>
<svg class="a" style="left:4px;top:16px" width="64" height="16" shape-rendering="crispEdges"><g fill="#808080"><use href="#g30" x="0"/><use href="#g30" x="8"/><use href="#g31" x="16"/><use href="#g32" x="24"/><use href="#g46" x="32"/><use href="#g45" x="40"/><use href="#g42" x="48"/><use href="#g30" x="56"/></g></svg>
<svg class="a" style="left:84px;top:16px" width="64" height="16" shape-rendering="crispEdges"><g fill="#808080"><use href="#g30" x="0"/><use href="#g30" x="8"/><use href="#g31" x="16"/><use href="#g32" x="24"/><use href="#g46" x="32"/><use href="#g45" x="40"/><use href="#g42" x="48"/><use href="#g34" x="56"/></g></svg>
<svg class="a" style="left:4px;top:32px" width="64" height="16" shape-rendering="crispEdges"><g fill="#808080"><use href="#g30" x="0"/><use href="#g30" x="8"/><use href="#g31" x="16"/><use href="#g32" x="24"/><use href="#g46" x="32"/><use href="#g45" x="40"/><use href="#g42" x="48"/><use href="#g34" x="56"/></g></svg>
<svg class="a" style="left:84px;top:32px" width="64" height="16" shape-rendering="crispEdges"><g fill="#808080"><use href="#g30" x="0"/><use href="#g30" x="8"/><use href="#g30" x="16"/><use href="#g30" x="24"/><use href="#g30" x="32"/><use href="#g30" x="40"/><use href="#g46" x="48"/><use href="#g46" x="56"/></g></svg>
<svg class="a" style="left:4px;top:48px" width="64" height="16" shape-rendering="crispEdges"><g fill="#808080"><use href="#g30" x="0"/><use href="#g30" x="8"/><use href="#g31" x="16"/><use href="#g32" x="24"/><use href="#g46" x="32"/><use href="#g45" x="40"/><use href="#g42" x="48"/><use href="#g38" x="56"/></g></svg>
<svg class="a" style="left:84px;top:48px" width="64" height="16" shape-rendering="crispEdges"><g fill="#808080"><use href="#g37" x="0"/><use href="#g43" x="8"/><use href="#g39" x="16"/><use href="#g34" x="24"/><use href="#g41" x="32"/><use href="#g46" x="40"/><use href="#g41" x="48"/><use href="#g43" x="56"/></g></svg>
<svg class="a" style="left:156px;top:48px" width="112" height="16" shape-rendering="crispEdges"><g fill="#808080"><use href="#g6e" x="0"/><use href="#g74" x="8"/><use href="#g64" x="16"/><use href="#g6c" x="24"/><use href="#g6c" x="32"/><use href="#g2e" x="40"/><use href="#g37" x="48"/><use href="#g43" x="56"/><use href="#g39" x="64"/><use href="#g34" x="72"/><use href="#g41" x="80"/><use href="#g46" x="88"/><use href="#g41" x="96"/><use href="#g43" x="104"/></g></svg>
<svg class="a" style="left:4px;top:64px" width="64" height="16" shape-rendering="crispEdges"><g fill="#808080"><use href="#g30" x="0"/><use href="#g30" x="8"/><use href="#g31" x="16"/><use href="#g32" x="24"/><use href="#g46" x="32"/><use href="#g45" x="40"/><use href="#g42" x="48"/><use href="#g43" x="56"/></g></svg>
<svg class="a" style="left:84px;top:64px" width="64" height="16" shape-rendering="crispEdges"><g fill="#808080"><use href="#g30" x="0"/><use href="#g41" x="8"/><use href="#g36" x="16"/><use href="#g41" x="24"/><use href="#g36" x="32"/><use href="#g38" x="40"/><use href="#g46" x="48"/><use href="#g43" x="56"/></g></svg>
<svg class="a" style="left:4px;top:80px" width="64" height="16" shape-rendering="crispEdges"><g fill="#808080"><use href="#g30" x="0"/><use href="#g30" x="8"/><use href="#g31" x="16"/><use href="#g32" x="24"/><use href="#g46" x="32"/><use href="#g45" x="40"/><use href="#g43" x="48"/><use href="#g30" x="56"/></g></svg>
<svg class="a" style="left:84px;top:80px" width="64" height="16" shape-rendering="crispEdges"><g fill="#808080"><use href="#g36" x="0"/><use href="#g33" x="8"/><use href="#g36" x="16"/><use href="#g38" x="24"/><use href="#g31" x="32"/><use href="#g45" x="40"/><use href="#g33" x="48"/><use href="#g38" x="56"/></g></svg>
<svg class="a" style="left:4px;top:96px" width="64" height="16" shape-rendering="crispEdges"><g fill="#808080"><use href="#g30" x="0"/><use href="#g30" x="8"/><use href="#g31" x="16"/><use href="#g32" x="24"/><use href="#g46" x="32"/><use href="#g45" x="40"/><use href="#g43" x="48"/><use href="#g34" x="56"/></g></svg>
<svg class="a" style="left:84px;top:96px" width="64" height="16" shape-rendering="crispEdges"><g fill="#808080"><use href="#g36" x="0"/><use href="#g38" x="8"/><use href="#g34" x="16"/><use href="#g46" x="24"/><use href="#g44" x="32"/><use href="#g31" x="40"/><use href="#g38" x="48"/><use href="#g39" x="56"/></g></svg>
<svg class="a" style="left:4px;top:112px" width="64" height="16" shape-rendering="crispEdges"><g fill="#808080"><use href="#g30" x="0"/><use href="#g30" x="8"/><use href="#g31" x="16"/><use href="#g32" x="24"/><use href="#g46" x="32"/><use href="#g45" x="40"/><use href="#g43" x="48"/><use href="#g38" x="56"/></g></svg>
<svg class="a" style="left:84px;top:112px" width="64" height="16" shape-rendering="crispEdges"><g fill="#808080"><use href="#g30" x="0"/><use href="#g43" x="8"/><use href="#g39" x="16"/><use href="#g31" x="24"/><use href="#g37" x="32"/><use href="#g34" x="40"/><use href="#g33" x="48"/><use href="#g32" x="56"/></g></svg>
<svg class="a" style="left:4px;top:128px" width="64" height="16" shape-rendering="crispEdges"><g fill="#808080"><use href="#g30" x="0"/><use href="#g30" x="8"/><use href="#g31" x="16"/><use href="#g32" x="24"/><use href="#g46" x="32"/><use href="#g45" x="40"/><use href="#g43" x="48"/><use href="#g43" x="56"/></g></svg>
<svg class="a" style="left:84px;top:128px" width="64" height="16" shape-rendering="crispEdges"><g fill="#808080"><use href="#g37" x="0"/><use href="#g45" x="8"/><use href="#g38" x="16"/><use href="#g44" x="24"/><use href="#g46" x="32"/><use href="#g34" x="40"/><use href="#g38" x="48"/><use href="#g42" x="56"/></g></svg>
<svg class="a" style="left:4px;top:144px" width="64" height="16" shape-rendering="crispEdges"><g fill="#808080"><use href="#g30" x="0"/><use href="#g30" x="8"/><use href="#g31" x="16"/><use href="#g32" x="24"/><use href="#g46" x="32"/><use href="#g45" x="40"/><use href="#g44" x="48"/><use href="#g30" x="56"/></g></svg>
<svg class="a" style="left:84px;top:144px" width="64" height="16" shape-rendering="crispEdges"><g fill="#808080"><use href="#g42" x="0"/><use href="#g37" x="8"/><use href="#g44" x="16"/><use href="#g42" x="24"/><use href="#g33" x="32"/><use href="#g33" x="40"/><use href="#g46" x="48"/><use href="#g34" x="56"/></g></svg>
<svg class="a" style="left:4px;top:160px" width="64" height="16" shape-rendering="crispEdges"><g fill="#808080"><use href="#g30" x="0"/><use href="#g30" x="8"/><use href="#g31" x="16"/><use href="#g32" x="24"/><use href="#g46" x="32"/><use href="#g45" x="40"/><use href="#g44" x="48"/><use href="#g34" x="56"/></g></svg>
<svg class="a" style="left:84px;top:160px" width="64" height="16" shape-rendering="crispEdges"><g fill="#808080"><use href="#g36" x="0"/><use href="#g36" x="8"/><use href="#g45" x="16"/><use href="#g33" x="24"/><use href="#g32" x="32"/><use href="#g42" x="40"/><use href="#g30" x="48"/><use href="#g34" x="56"/></g></svg>
<svg class="a" style="left:4px;top:176px" width="64" height="16" shape-rendering="crispEdges"><g fill="#808080"><use href="#g30" x="0"/><use href="#g30" x="8"/><use href="#g31" x="16"/><use href="#g32" x="24"/><use href="#g46" x="32"/><use href="#g45" x="40"/><use href="#g44" x="48"/><use href="#g38" x="56"/></g></svg>
<svg class="a" style="left:84px;top:176px" width="64" height="16" shape-rendering="crispEdges"><g fill="#808080"><use href="#g35" x="0"/><use href="#g33" x="8"/><use href="#g33" x="16"/><use href="#g32" x="24"/><use href="#g33" x="32"/><use href="#g33" x="40"/><use href="#g42" x="48"/><use href="#g42" x="56"/></g></svg>
<svg class="a" style="left:4px;top:192px" width="64" height="16" shape-rendering="crispEdges"><g fill="#808080"><use href="#g30" x="0"/><use href="#g30" x="8"/><use href="#g31" x="16"/><use href="#g32" x="24"/><use href="#g46" x="32"/><use href="#g45" x="40"/><use href="#g44" x="48"/><use href="#g43" x="56"/></g></svg>
<svg class="a" style="left:84px;top:192px" width="64" height="16" shape-rendering="crispEdges"><g fill="#808080"><use href="#g36" x="0"/><use href="#g35" x="8"/><use href="#g37" x="16"/><use href="#g33" x="24"/><use href="#g37" x="32"/><use href="#g35" x="40"/><use href="#g36" x="48"/><use href="#g38" x="56"/></g></svg>
<svg class="a" style="left:4px;top:208px" width="64" height="16" shape-rendering="crispEdges"><g fill="#808080"><use href="#g30" x="0"/><use href="#g30" x="8"/><use href="#g31" x="16"/><use href="#g32" x="24"/><use href="#g46" x="32"/><use href="#g45" x="40"/><use href="#g45" x="48"/><use href="#g30" x="56"/></g></svg>
<svg class="a" style="left:84px;top:208px" width="64" height="16" shape-rendering="crispEdges"><g fill="#808080"><use href="#g44" x="0"/><use href="#g32" x="8"/><use href="#g33" x="16"/><use href="#g33" x="24"/><use href="#g35" x="32"/><use href="#g34" x="40"/><use href="#g37" x="48"/><use href="#g32" x="56"/></g></svg>
<svg class="a" style="left:4px;top:224px" width="64" height="16" shape-rendering="crispEdges"><g fill="#808080"><use href="#g30" x="0"/><use href="#g30" x="8"/><use href="#g31" x="16"/><use href="#g32" x="24"/><use href="#g46" x="32"/><use href="#g45" x="40"/><use href="#g45" x="48"/><use href="#g34" x="56"/></g></svg>
<svg class="a" style="left:84px;top:224px" width="64" height="16" shape-rendering="crispEdges"><g fill="#808080"><use href="#g33" x="0"/><use href="#g30" x="8"/><use href="#g35" x="16"/><use href="#g41" x="24"/><use href="#g38" x="32"/><use href="#g42" x="40"/><use href="#g36" x="48"/><use href="#g34" x="56"/></g></svg>
<svg class="a" style="left:4px;top:240px" width="64" height="16" shape-rendering="crispEdges"><g fill="#808080"><use href="#g30" x="0"/><use href="#g30" x="8"/><use href="#g31" x="16"/><use href="#g32" x="24"/><use href="#g46" x="32"/><use href="#g45" x="40"/><use href="#g45" x="48"/><use href="#g38" x="56"/></g></svg>
<svg class="a" style="left:84px;top:240px" width="64" height="16" shape-rendering="crispEdges"><g fill="#808080"><use href="#g38" x="0"/><use href="#g42" x="8"/><use href="#g30" x="16"/><use href="#g43" x="24"/><use href="#g34" x="32"/><use href="#g42" x="40"/><use href="#g38" x="48"/><use href="#g42" x="56"/></g></svg>
<svg class="a" style="left:4px;top:256px" width="64" height="16" shape-rendering="crispEdges"><g fill="#808080"><use href="#g30" x="0"/><use href="#g30" x="8"/><use href="#g31" x="16"/><use href="#g32" x="24"/><use href="#g46" x="32"/><use href="#g45" x="40"/><use href="#g45" x="48"/><use href="#g43" x="56"/></g></svg>
<svg class="a" style="left:84px;top:256px" width="64" height="16" shape-rendering="crispEdges"><g fill="#808080"><use href="#g30" x="0"/><use href="#g39" x="8"/><use href="#g38" x="16"/><use href="#g42" x="24"/><use href="#g31" x="32"/><use href="#g43" x="40"/><use href="#g34" x="48"/><use href="#g39" x="56"/></g></svg>
<svg class="a" style="left:4px;top:272px" width="64" height="16" shape-rendering="crispEdges"><g fill="#808080"><use href="#g30" x="0"/><use href="#g30" x="8"/><use href="#g31" x="16"/><use href="#g32" x="24"/><use href="#g46" x="32"/><use href="#g45" x="40"/><use href="#g46" x="48"/><use href="#g30" x="56"/></g></svg>
<svg class="a" style="left:84px;top:272px" width="64" height="16" shape-rendering="crispEdges"><g fill="#808080"><use href="#g41" x="0"/><use href="#g44" x="8"/><use href="#g30" x="16"/><use href="#g38" x="24"/><use href="#g36" x="32"/><use href="#g39" x="40"/><use href="#g38" x="48"/><use href="#g42" x="56"/></g></svg>
</div>
</body></html>
